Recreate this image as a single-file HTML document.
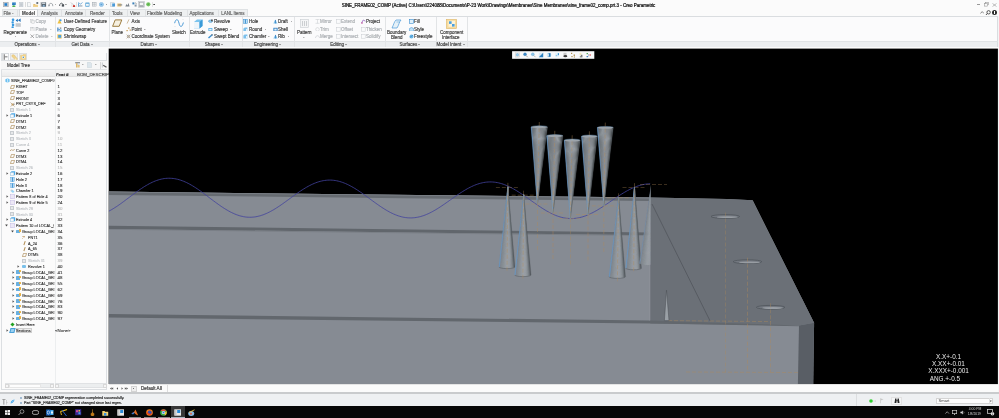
<!DOCTYPE html><html><head><meta charset="utf-8"><style>
html,body{margin:0;padding:0;}
body{width:999px;height:418px;overflow:hidden;position:relative;background:#f4f5f6;font-family:"Liberation Sans", sans-serif;}
.t{position:absolute;white-space:nowrap;line-height:1;-webkit-text-stroke:.14px currentColor;}
#root{position:absolute;left:0;top:0;width:999px;height:418px;will-change:transform;}
.r{position:absolute;box-sizing:border-box;}
svg{position:absolute;}
</style></head><body><div id="root"><div class="r" style="left:0px;top:0px;width:999px;height:16px;background:#fbfbfb;"></div><svg style="left:3px;top:2px" width="5.5" height="5" viewBox="0 0 5.5 5"><rect x=".3" y=".3" width="4.9" height="4.5" fill="#c4c8cc" stroke="#9aa0a6" stroke-width=".5"/><rect x="1.5" y="1.2" width="2.6" height="2.6" fill="#1f80d2"/></svg><svg style="left:11px;top:2px" width="5.5" height="5" viewBox="0 0 5.5 5"><rect x="1" y=".3" width="4" height="2.8" fill="#5a9ccf" rx=".5"/><circle cx="2.6" cy="2.2" r="1.3" fill="#2a7ac0"/><ellipse cx="2.8" cy="4.3" rx="1.8" ry=".7" fill="#40b040"/></svg><svg style="left:19px;top:2px" width="4.5" height="5" viewBox="0 0 4.5 5"><rect x=".5" y=".3" width="3.5" height="4.5" fill="#d6dbe0" stroke="#b6bec6" stroke-width=".4"/><line x1="1.2" y1="2" x2="3.3" y2="2" stroke="#9aa2aa" stroke-width=".4"/><line x1="1.2" y1="3.2" x2="3.3" y2="3.2" stroke="#9aa2aa" stroke-width=".4"/></svg><div class="r" style="left:24.6px;top:2px;width:0.5px;height:5px;background:#dcdcdc;"></div><svg style="left:26.5px;top:2px" width="4.5" height="5" viewBox="0 0 4.5 5"><path d="M.5,.3 H2.8 L4,1.5 V4.7 H.5 Z" fill="#f6f7f8" stroke="#a8b0b8" stroke-width=".45"/></svg><svg style="left:33px;top:1.5px" width="5.5" height="5.5" viewBox="0 0 5.5 5.5"><path d="M.3,2 H2 L2.6,2.7 H4.8 V5.2 H.3 Z" fill="#e8c070"/><path d="M.8,3.2 H5.2 L4.6,5.2 H.3 Z" fill="#f2d48e"/><rect x="3.4" y=".2" width="1.8" height="1.6" fill="#4a5560"/></svg><div class="r" style="left:39.6px;top:2px;width:0.5px;height:5px;background:#dcdcdc;"></div><svg style="left:41px;top:2px" width="5.5" height="5" viewBox="0 0 5.5 5"><rect x=".3" y=".3" width="4.8" height="4.5" fill="#5a6670" rx=".3"/><rect x="1.1" y=".5" width="3.2" height="1.5" fill="#c9d0d6"/><rect x="1.8" y="2.9" width="1.9" height="1.9" fill="#8fb8d8"/></svg><svg style="left:48px;top:2px" width="5.5" height="5" viewBox="0 0 5.5 5"><path d="M1.2,3.8 C.5,1.5 3,.6 4.5,2.2 L4.8,4.2" fill="none" stroke="#8a9096" stroke-width=".8"/><polygon points=".2,2.8 2,3.4 .8,4.8" fill="#8a9096"/></svg><svg style="left:54.54px;top:3.7600000000000002px" width="1.92" height="1.2800000000000002" viewBox="0 0 1.92 1.2800000000000002"><polygon points="0,0 1.92,0 0.96,1.2000000000000002" fill="#888"/></svg><svg style="left:59px;top:2px" width="5.5" height="5" viewBox="0 0 5.5 5"><path d="M.6,4 C.4,1.6 2.4,.6 3.6,1.6" fill="none" stroke="#4a5056" stroke-width=".9"/><rect x="2.8" y="2.2" width="2.3" height="2.4" fill="#4a5056"/></svg><svg style="left:65.04px;top:3.7600000000000002px" width="1.92" height="1.2800000000000002" viewBox="0 0 1.92 1.2800000000000002"><polygon points="0,0 1.92,0 0.96,1.2000000000000002" fill="#666"/></svg><svg style="left:70px;top:1.8px" width="5.5" height="5.5" viewBox="0 0 5.5 5.5"><path d="M.6,.6 L4.2,3" stroke="#c0c4c8" stroke-width=".7"/><path d="M1.5,4.5 L2.2,1.5" stroke="#d0d4d8" stroke-width=".6"/><circle cx="4" cy="4.2" r="1.2" fill="#cc3a30"/></svg><div class="r" style="left:76.3px;top:2px;width:0.5px;height:5px;background:#e2e2e2;"></div><svg style="left:78px;top:2px" width="5" height="5" viewBox="0 0 5 5"><path d="M.4,2.6 L1.6,1.4 L2.6,2.2 L4.4,.4" fill="none" stroke="#3d8ccc" stroke-width=".7"/><rect x=".4" y="3" width="4" height="1.8" fill="#b8c4ce"/><line x1=".5" y1=".3" x2=".5" y2="4.8" stroke="#3d8ccc" stroke-width=".6"/></svg><svg style="left:85px;top:2px" width="5" height="5" viewBox="0 0 5 5"><rect x=".3" y=".5" width="4.2" height="4.2" fill="#5ea6d6" rx=".4"/><rect x="1" y="1.8" width="2.8" height="2" fill="#eef6fb"/></svg><svg style="left:92px;top:2.3px" width="4.5" height="4.5" viewBox="0 0 4.5 4.5"><rect x=".3" y=".3" width="3.8" height="3.8" fill="none" stroke="#9aa2aa" stroke-width=".5"/><line x1="2.2" y1=".3" x2="2.2" y2="4.1" stroke="#9aa2aa" stroke-width=".5"/><line x1=".3" y1="2.2" x2="4.1" y2="2.2" stroke="#9aa2aa" stroke-width=".5"/></svg><svg style="left:99px;top:2px" width="5" height="5" viewBox="0 0 5 5"><circle cx="2.4" cy="2.5" r="2.1" fill="#bcdcf2" stroke="#5aa0d8" stroke-width=".5"/><rect x="1.4" y="1.6" width="2" height="1.8" fill="#5aa0d8"/></svg><svg style="left:105.54px;top:3.7600000000000002px" width="1.92" height="1.2800000000000002" viewBox="0 0 1.92 1.2800000000000002"><polygon points="0,0 1.92,0 0.96,1.2000000000000002" fill="#666"/></svg><svg style="left:110px;top:2px" width="5.5" height="5" viewBox="0 0 5.5 5"><rect x=".3" y=".8" width="4" height="3.8" fill="#e8eef2" stroke="#a8b4be" stroke-width=".4"/><rect x="2.2" y="1.5" width="2.8" height="3" fill="#4a9ad8"/></svg><svg style="left:117px;top:2px" width="5.5" height="5" viewBox="0 0 5.5 5"><rect x=".3" y="1.5" width="4" height="3" fill="#e8c070"/><rect x="1.2" y="2.3" width="4" height="1.2" fill="#8a9096"/></svg><svg style="left:125px;top:2px" width="5" height="5" viewBox="0 0 5 5"><path d="M.3,4.5 L1.6,2 L2.5,3.5 L3.5,1 L4.6,4.5 Z" fill="#7a828a"/></svg><svg style="left:132px;top:2px" width="5.5" height="5" viewBox="0 0 5.5 5"><rect x=".4" y=".4" width="2" height="2" fill="#3a80b8"/><rect x="2.6" y="2.6" width="2" height="2" fill="#8a9aa8"/><path d="M3,.6 L4.8,2" stroke="#555" stroke-width=".5"/></svg><svg style="left:138px;top:1.3px" width="7" height="6.8" viewBox="0 0 7 6.8"><rect x=".3" y=".3" width="6.4" height="6.2" fill="#d8dbde" stroke="#b8bcc0" stroke-width=".4"/><rect x="1.5" y="1.3" width="4" height="3" fill="#f6f6f6" stroke="#8a9096" stroke-width=".4"/><rect x="1.2" y="4.8" width="4.6" height=".8" fill="#8a9096"/></svg><svg style="left:146px;top:2.2px" width="5" height="5" viewBox="0 0 5 5"><circle cx="2.3" cy="2.3" r="2.1" fill="#7cc66a"/><circle cx="2.3" cy="2.3" r="1" fill="#5ab048"/></svg><div class="r" style="left:151.6px;top:2px;width:0.5px;height:5px;background:#e4e4e4;"></div><svg style="left:152.8px;top:3.8px" width="2.4" height="1.6" viewBox="0 0 2.4 1.6"><polygon points="0,0 2.4,0 1.2,1.5" fill="#333"/></svg><div class="t" style="left:341.7px;top:3.55px;font-size:4.47px;color:#111;font-weight:normal;-webkit-text-stroke:.22px #111">SINE_FRAME02_COMP (Active) C:\Users\224088\Documents\P-23 Work\Drawings\Membranes\Sine Membranes\sine_frame02_comp.prt.3 - Creo Parametric</div><div class="r" style="left:977px;top:4.4px;width:3px;height:0.7px;background:#999;"></div><svg style="left:983.5px;top:2.3px" width="5.5" height="4.5" viewBox="0 0 5.5 4.5"><rect x="1.5" y=".4" width="3.2" height="2.4" fill="none" stroke="#8a8a8a" stroke-width=".5"/><rect x=".4" y="1.6" width="3.2" height="2.5" fill="#fbfbfb" stroke="#8a8a8a" stroke-width=".5"/></svg><svg style="left:991.5px;top:2.5px" width="5" height="4" viewBox="0 0 5 4"><path d="M.5,.5 L4.5,3.5 M4.5,.5 L.5,3.5" stroke="#8a8a8a" stroke-width=".55"/></svg><svg style="left:979.5px;top:10.5px" width="4.5" height="3" viewBox="0 0 4.5 3"><path d="M.4,2.5 L2.2,.6 L4,2.5" fill="none" stroke="#555" stroke-width=".7"/></svg><svg style="left:984.5px;top:9.6px" width="6" height="5.5" viewBox="0 0 6 5.5"><circle cx="3.6" cy="2.3" r="1.7" fill="none" stroke="#333" stroke-width=".8"/><line x1="2.4" y1="3.5" x2=".5" y2="5.3" stroke="#333" stroke-width=".9"/></svg><div class="r" style="left:991.8px;top:9.8px;width:5.2px;height:5.2px;background:#2a2a2a;border-radius:50%"></div><div class="r" style="left:994.05px;top:10.9px;width:0.7px;height:0.7px;background:#fff;"></div><div class="r" style="left:994.05px;top:12px;width:0.7px;height:2px;background:#fff;"></div><div class="r" style="left:2px;top:9.4px;width:245.5px;height:7px;background:#eef0f1;border:.5px solid #dfe2e4;border-bottom:none"></div><div class="r" style="left:19px;top:9px;width:18.5px;height:8px;background:#fcfcfc;border:.5px solid #d6d9dc;border-bottom:none"></div><div class="r" style="left:16.8px;top:10.2px;width:0.5px;height:6px;background:#dfe1e3;"></div><div class="r" style="left:60.5px;top:10.2px;width:0.5px;height:6px;background:#dfe1e3;"></div><div class="r" style="left:84.6px;top:10.2px;width:0.5px;height:6px;background:#dfe1e3;"></div><div class="r" style="left:109.4px;top:10.2px;width:0.5px;height:6px;background:#dfe1e3;"></div><div class="r" style="left:127px;top:10.2px;width:0.5px;height:6px;background:#dfe1e3;"></div><div class="r" style="left:144.7px;top:10.2px;width:0.5px;height:6px;background:#dfe1e3;"></div><div class="r" style="left:187px;top:10.2px;width:0.5px;height:6px;background:#dfe1e3;"></div><div class="r" style="left:218.3px;top:10.2px;width:0.5px;height:6px;background:#dfe1e3;"></div><div class="t" style="left:3.5px;top:12.43px;font-size:4.5px;color:#5a5a5a;font-weight:normal;">File</div><div class="t" style="left:22px;top:12.43px;font-size:4.5px;color:#222;font-weight:bold;-webkit-text-stroke:0">Model</div><div class="t" style="left:41px;top:12.43px;font-size:4.5px;color:#5a5a5a;font-weight:normal;">Analysis</div><div class="t" style="left:65px;top:12.43px;font-size:4.5px;color:#5a5a5a;font-weight:normal;">Annotate</div><div class="t" style="left:90px;top:12.43px;font-size:4.5px;color:#5a5a5a;font-weight:normal;">Render</div><div class="t" style="left:111.9px;top:12.43px;font-size:4.5px;color:#5a5a5a;font-weight:normal;">Tools</div><div class="t" style="left:130px;top:12.43px;font-size:4.5px;color:#5a5a5a;font-weight:normal;">View</div><div class="t" style="left:146.9px;top:12.43px;font-size:4.5px;color:#5a5a5a;font-weight:normal;">Flexible Modeling</div><div class="t" style="left:189.4px;top:12.43px;font-size:4.5px;color:#5a5a5a;font-weight:normal;">Applications</div><div class="t" style="left:221.2px;top:12.43px;font-size:4.5px;color:#5a5a5a;font-weight:normal;">LANL Items</div><svg style="left:12.46px;top:13.24px" width="1.68" height="1.1199999999999999" viewBox="0 0 1.68 1.1199999999999999"><polygon points="0,0 1.68,0 0.84,1.0499999999999998" fill="#777"/></svg><div class="r" style="left:0px;top:16px;width:998px;height:25.3px;background:#fbfbfc;border-top:.6px solid #dadde0;border-right:.6px solid #dadde0"></div><div class="r" style="left:0px;top:41.3px;width:998px;height:5.5px;background:#eceef0;border-top:.5px solid #e0e3e5;border-right:.6px solid #dadde0"></div><div class="r" style="left:0px;top:46.8px;width:999px;height:2px;background:#fcfcfc;"></div><div class="r" style="left:55px;top:17px;width:0.6px;height:30px;background:#e2e4e6;"></div><div class="r" style="left:109.4px;top:17px;width:0.6px;height:30px;background:#e2e4e6;"></div><div class="r" style="left:188.5px;top:17px;width:0.6px;height:30px;background:#e2e4e6;"></div><div class="r" style="left:241.9px;top:17px;width:0.6px;height:30px;background:#e2e4e6;"></div><div class="r" style="left:294.4px;top:17px;width:0.6px;height:30px;background:#e2e4e6;"></div><div class="r" style="left:385px;top:17px;width:0.6px;height:30px;background:#e2e4e6;"></div><div class="r" style="left:435.6px;top:17px;width:0.6px;height:30px;background:#e2e4e6;"></div><div class="r" style="left:466.9px;top:17px;width:0.6px;height:30px;background:#e2e4e6;"></div><div class="t" style="left:-3px;width:60px;text-align:center;top:43.23px;font-size:4.5px;color:#3a3a3a"><span>Operations</span><span style="display:inline-block;width:1.2px"></span><svg style="position:relative;top:-.4px" width="2" height="1.4" viewBox="0 0 2 1.4"><polygon points="0,0 2,0 1,1.3" fill="#666"/></svg></div><div class="t" style="left:52px;width:60px;text-align:center;top:43.23px;font-size:4.5px;color:#3a3a3a"><span>Get Data</span><span style="display:inline-block;width:1.2px"></span><svg style="position:relative;top:-.4px" width="2" height="1.4" viewBox="0 0 2 1.4"><polygon points="0,0 2,0 1,1.3" fill="#666"/></svg></div><div class="t" style="left:118.69999999999999px;width:60px;text-align:center;top:43.23px;font-size:4.5px;color:#3a3a3a"><span>Datum</span><span style="display:inline-block;width:1.2px"></span><svg style="position:relative;top:-.4px" width="2" height="1.4" viewBox="0 0 2 1.4"><polygon points="0,0 2,0 1,1.3" fill="#666"/></svg></div><div class="t" style="left:184px;width:60px;text-align:center;top:43.23px;font-size:4.5px;color:#3a3a3a"><span>Shapes</span><span style="display:inline-block;width:1.2px"></span><svg style="position:relative;top:-.4px" width="2" height="1.4" viewBox="0 0 2 1.4"><polygon points="0,0 2,0 1,1.3" fill="#666"/></svg></div><div class="t" style="left:237.5px;width:60px;text-align:center;top:43.23px;font-size:4.5px;color:#3a3a3a"><span>Engineering</span><span style="display:inline-block;width:1.2px"></span><svg style="position:relative;top:-.4px" width="2" height="1.4" viewBox="0 0 2 1.4"><polygon points="0,0 2,0 1,1.3" fill="#666"/></svg></div><div class="t" style="left:308.7px;width:60px;text-align:center;top:43.23px;font-size:4.5px;color:#3a3a3a"><span>Editing</span><span style="display:inline-block;width:1.2px"></span><svg style="position:relative;top:-.4px" width="2" height="1.4" viewBox="0 0 2 1.4"><polygon points="0,0 2,0 1,1.3" fill="#666"/></svg></div><div class="t" style="left:380px;width:60px;text-align:center;top:43.23px;font-size:4.5px;color:#3a3a3a"><span>Surfaces</span><span style="display:inline-block;width:1.2px"></span><svg style="position:relative;top:-.4px" width="2" height="1.4" viewBox="0 0 2 1.4"><polygon points="0,0 2,0 1,1.3" fill="#666"/></svg></div><div class="t" style="left:420.6px;width:60px;text-align:center;top:43.23px;font-size:4.5px;color:#3a3a3a"><span>Model Intent</span><span style="display:inline-block;width:1.2px"></span><svg style="position:relative;top:-.4px" width="2" height="1.4" viewBox="0 0 2 1.4"><polygon points="0,0 2,0 1,1.3" fill="#666"/></svg></div><svg style="left:10.5px;top:18.3px" width="10.5" height="10.5" viewBox="0 0 10.5 10.5"><g fill="#3a9ae0"><rect x=".9" y=".6" width="2.3" height="2.3" rx=".7"/><rect x=".5" y="3.2" width="2.3" height="2.3" rx=".7"/><rect x=".9" y="5.8" width="2.3" height="2.3" rx=".7"/><rect x=".5" y="8.2" width="2.3" height="1.9" rx=".7"/></g><path d="M4.6,2.6 L6.8,.8 L6.8,4 Z M7,2.2 L9.6,.6 L9.6,4 Z" fill="#1d6fb8"/><rect x="4.6" y="5.2" width="5.2" height="3.6" fill="#c4c8cc"/></svg><div class="t" style="left:3.5px;top:30.73px;font-size:4.5px;color:#333;font-weight:normal;">Regenerate</div><svg style="left:14.54px;top:36.16px" width="1.92" height="1.2800000000000002" viewBox="0 0 1.92 1.2800000000000002"><polygon points="0,0 1.92,0 0.96,1.2000000000000002" fill="#777"/></svg><svg style="left:30px;top:19px" width="5" height="4.5" viewBox="0 0 5 4.5"><rect x=".4" y=".4" width="2.6" height="2.8" fill="#f0f0f0" stroke="#bcc0c4" stroke-width=".4"/><rect x="1.8" y="1.4" width="2.6" height="2.8" fill="#f0f0f0" stroke="#bcc0c4" stroke-width=".4"/></svg><svg style="left:30px;top:26.6px" width="5" height="4.8" viewBox="0 0 5 4.8"><rect x=".5" y=".8" width="3.6" height="3.6" fill="#eee" stroke="#bcc0c4" stroke-width=".4"/><rect x="1.5" y=".3" width="1.6" height="1" fill="#bcc0c4"/></svg><svg style="left:30px;top:34.2px" width="5" height="4.5" viewBox="0 0 5 4.5"><path d="M.5,.5 L4,4 M4,.5 L.5,4" stroke="#777" stroke-width=".6"/></svg><div class="t" style="left:35.5px;top:19.53px;font-size:4.5px;color:#a9adb1;font-weight:normal;">Copy</div><div class="t" style="left:35.5px;top:27.83px;font-size:4.5px;color:#a9adb1;font-weight:normal;">Paste</div><svg style="left:49.959999999999994px;top:29.040000000000003px" width="1.68" height="1.1199999999999999" viewBox="0 0 1.68 1.1199999999999999"><polygon points="0,0 1.68,0 0.84,1.0499999999999998" fill="#b0b0b0"/></svg><div class="t" style="left:35.5px;top:34.63px;font-size:4.5px;color:#a9adb1;font-weight:normal;">Delete</div><svg style="left:51.459999999999994px;top:35.839999999999996px" width="1.68" height="1.1199999999999999" viewBox="0 0 1.68 1.1199999999999999"><polygon points="0,0 1.68,0 0.84,1.0499999999999998" fill="#b0b0b0"/></svg><svg style="left:57.3px;top:18.8px" width="5" height="5" viewBox="0 0 5 5"><path d="M1.8,.4 H3.2 V1.8 L4.6,4.6 H.4 L1.8,1.8 Z" fill="#f0c040"/><circle cx="3.6" cy="1.3" r="1" fill="#4aa0e0"/></svg><svg style="left:57.3px;top:26.5px" width="5" height="5" viewBox="0 0 5 5"><rect x=".3" y=".5" width="1.2" height="4" fill="#3a7fc0"/><rect x="1.5" y="2" width="1.5" height=".8" fill="#3a7fc0"/><rect x="2.5" y="2.5" width="2.2" height="2.2" fill="#6ab8e8"/><rect x="2.8" y=".4" width="1.5" height="1.5" fill="#999"/></svg><svg style="left:57.3px;top:34px" width="5" height="5" viewBox="0 0 5 5"><rect x=".3" y=".3" width="4.3" height="4.3" fill="#f2c860"/><rect x="1.2" y="1" width="3" height="2.8" fill="#4aa0e0"/></svg><div class="t" style="left:63.7px;top:19.53px;font-size:4.5px;color:#333;font-weight:normal;">User-Defined Feature</div><div class="t" style="left:63.7px;top:27.83px;font-size:4.5px;color:#333;font-weight:normal;">Copy Geometry</div><div class="t" style="left:63.7px;top:34.63px;font-size:4.5px;color:#333;font-weight:normal;">Shrinkwrap</div><svg style="left:112px;top:19.3px" width="10.5" height="8.5" viewBox="0 0 10.5 8.5"><polygon points="3.2,.9 9.8,.9 7.2,7.3 .6,7.3" fill="#f6f0e0" stroke="#9c7c40" stroke-width="1"/></svg><div class="t" style="left:111.5px;top:30.53px;font-size:4.5px;color:#333;font-weight:normal;">Plane</div><svg style="left:125.8px;top:18.9px" width="4" height="5" viewBox="0 0 4 5"><line x1="1" y1="4.6" x2="3" y2=".4" stroke="#b09060" stroke-width=".6"/></svg><svg style="left:125.5px;top:26.5px" width="5" height="5" viewBox="0 0 5 5"><rect x="2.2" y=".5" width="1.2" height="1.2" fill="#c09040"/><rect x=".5" y="3" width="1.2" height="1.2" fill="#c09040"/><rect x="3.6" y="2.5" width="1.2" height="1.2" fill="#c09040"/></svg><svg style="left:125.5px;top:34px" width="5" height="5" viewBox="0 0 5 5"><path d="M.5,.5 L4.5,4.5 M4.5,.5 L.5,4.5" stroke="#b09060" stroke-width=".5"/><circle cx="2.5" cy="2.5" r="1.2" fill="none" stroke="#6a6a6a" stroke-width=".5"/></svg><div class="t" style="left:131.5px;top:19.53px;font-size:4.5px;color:#333;font-weight:normal;">Axis</div><div class="t" style="left:131.5px;top:27.83px;font-size:4.5px;color:#333;font-weight:normal;">Point</div><div class="t" style="left:131.5px;top:34.63px;font-size:4.5px;color:#333;font-weight:normal;">Coordinate System</div><svg style="left:144.16px;top:29.040000000000003px" width="1.68" height="1.1199999999999999" viewBox="0 0 1.68 1.1199999999999999"><polygon points="0,0 1.68,0 0.84,1.0499999999999998" fill="#777"/></svg><svg style="left:174px;top:18.8px" width="10" height="8.5" viewBox="0 0 10 8.5"><path d="M.6,4.2 C2,-.8 4,-.3 5,4.2 C6,8.7 8,8.7 9.4,3.5" fill="none" stroke="#3a8ed0" stroke-width=".9"/><g fill="#c0c4c8"><rect x=".5" y="7.5" width="1" height=".5"/><rect x="8.5" y=".5" width="1" height=".5"/></g></svg><div class="t" style="left:172px;top:30.53px;font-size:4.5px;color:#333;font-weight:normal;">Sketch</div><svg style="left:192.5px;top:18.5px" width="10" height="10" viewBox="0 0 10 10"><polygon points="1,3 4,.5 9.5,.5 9.5,7 6.5,9.5 1,9.5" fill="#7cc4ee"/><polygon points="1,3 6.5,3 6.5,9.5 1,9.5" fill="#eef5fa"/><polygon points="6.5,3 9.5,.5 9.5,7 6.5,9.5" fill="#3a9ad8"/></svg><div class="t" style="left:190px;top:30.53px;font-size:4.5px;color:#333;font-weight:normal;">Extrude</div><svg style="left:208.3px;top:19.3px" width="5" height="4.5" viewBox="0 0 5 4.5"><path d="M.4,2.2 C.4,.6 4.6,.6 4.6,2.2 C4.6,3.8 .4,3.8 .4,2.2" fill="#9ad0f0" stroke="#3a90d0" stroke-width=".5"/><rect x="3" y=".5" width="1.8" height="1.8" fill="#555"/></svg><svg style="left:208.3px;top:26.8px" width="5" height="4.5" viewBox="0 0 5 4.5"><rect x=".4" y="1" width="4" height="3.2" fill="#5ab0e8" rx=".6"/><rect x="1.2" y="1.8" width="2.4" height="1.6" fill="#e6f2fa"/></svg><svg style="left:208.3px;top:34.3px" width="5" height="4.5" viewBox="0 0 5 4.5"><path d="M.5,4 L4.5,.5" stroke="#3a8ed0" stroke-width="1.4"/><rect x="3.4" y=".3" width="1.2" height="1.2" fill="#777"/></svg><div class="t" style="left:214px;top:19.53px;font-size:4.5px;color:#333;font-weight:normal;">Revolve</div><div class="t" style="left:214px;top:27.83px;font-size:4.5px;color:#333;font-weight:normal;">Sweep</div><div class="t" style="left:214px;top:34.63px;font-size:4.5px;color:#333;font-weight:normal;">Swept Blend</div><svg style="left:230.46px;top:29.040000000000003px" width="1.68" height="1.1199999999999999" viewBox="0 0 1.68 1.1199999999999999"><polygon points="0,0 1.68,0 0.84,1.0499999999999998" fill="#777"/></svg><svg style="left:243.3px;top:19px" width="5" height="4.8" viewBox="0 0 5 4.8"><rect x=".4" y=".4" width="4" height="4" fill="#bfe0f6" stroke="#3a90d0" stroke-width=".5"/><rect x="1.9" y=".4" width="1" height="4" fill="#3a90d0"/></svg><svg style="left:243.3px;top:26.6px" width="5" height="4.8" viewBox="0 0 5 4.8"><path d="M.4,4.4 V2 Q.4,.4 2,.4 H4.4 V4.4 Z" fill="#7cc0ec"/><rect x="3" y="2" width="1.5" height="2.4" fill="#e8f4fb"/></svg><svg style="left:243.3px;top:34.1px" width="5" height="4.8" viewBox="0 0 5 4.8"><path d="M.4,4.4 V1.6 L1.6,.4 H4.4 V4.4 Z" fill="#7cc0ec"/><rect x="3" y="2" width="1.5" height="2.4" fill="#e8f4fb"/></svg><div class="t" style="left:249px;top:19.53px;font-size:4.5px;color:#333;font-weight:normal;">Hole</div><div class="t" style="left:249px;top:27.83px;font-size:4.5px;color:#333;font-weight:normal;">Round</div><div class="t" style="left:249px;top:34.63px;font-size:4.5px;color:#333;font-weight:normal;">Chamfer</div><svg style="left:264.66px;top:29.040000000000003px" width="1.68" height="1.1199999999999999" viewBox="0 0 1.68 1.1199999999999999"><polygon points="0,0 1.68,0 0.84,1.0499999999999998" fill="#777"/></svg><svg style="left:268.46000000000004px;top:35.839999999999996px" width="1.68" height="1.1199999999999999" viewBox="0 0 1.68 1.1199999999999999"><polygon points="0,0 1.68,0 0.84,1.0499999999999998" fill="#777"/></svg><svg style="left:272.5px;top:19px" width="5" height="4.8" viewBox="0 0 5 4.8"><polygon points="2.2,.4 .4,4.4 4.4,4.4" fill="#7cc0ec"/><rect x="2" y="1" width=".8" height="3.4" fill="#3a80c0"/></svg><svg style="left:272.5px;top:26.6px" width="5" height="4.8" viewBox="0 0 5 4.8"><rect x=".4" y=".8" width="4.2" height="3.6" fill="#2e7cc0"/><rect x="1.3" y="1.6" width="2.4" height="2" fill="#dff0fa"/></svg><svg style="left:272.5px;top:34.1px" width="5" height="4.8" viewBox="0 0 5 4.8"><path d="M.4,4.4 L2.5,.4 L4.6,4.4" fill="#7cc0ec"/><rect x="2.1" y="1" width=".8" height="3.4" fill="#3a80c0"/></svg><div class="t" style="left:278px;top:19.53px;font-size:4.5px;color:#333;font-weight:normal;">Draft</div><div class="t" style="left:278px;top:27.83px;font-size:4.5px;color:#333;font-weight:normal;">Shell</div><div class="t" style="left:278px;top:34.63px;font-size:4.5px;color:#333;font-weight:normal;">Rib</div><svg style="left:290.66px;top:20.740000000000002px" width="1.68" height="1.1199999999999999" viewBox="0 0 1.68 1.1199999999999999"><polygon points="0,0 1.68,0 0.84,1.0499999999999998" fill="#777"/></svg><svg style="left:287.76000000000005px;top:35.839999999999996px" width="1.68" height="1.1199999999999999" viewBox="0 0 1.68 1.1199999999999999"><polygon points="0,0 1.68,0 0.84,1.0499999999999998" fill="#777"/></svg><svg style="left:299.5px;top:18.5px" width="9" height="9" viewBox="0 0 9 9"><rect x=".5" y=".5" width="8" height="8" fill="#f4f5f6" stroke="#c9cdd1" stroke-width=".6"/><g stroke="#aeb3b8" stroke-width=".6"><line x1="2.5" y1="2" x2="2.5" y2="7"/><line x1="4.5" y1="2" x2="4.5" y2="7"/><line x1="6.5" y1="2" x2="6.5" y2="7"/></g></svg><div class="t" style="left:297px;top:31.23px;font-size:4.5px;color:#333;font-weight:normal;">Pattern</div><svg style="left:303.16px;top:36.54px" width="1.68" height="1.1199999999999999" viewBox="0 0 1.68 1.1199999999999999"><polygon points="0,0 1.68,0 0.84,1.0499999999999998" fill="#888"/></svg><svg style="left:315px;top:19px" width="5" height="4.8" viewBox="0 0 5 4.8"><path d="M.5,.5 H4.5 M.5,4.3 H4.5 M2.5,.5 V4.3" stroke="#c4c8cc" stroke-width=".5"/></svg><svg style="left:315px;top:26.6px" width="5" height="4.8" viewBox="0 0 5 4.8"><circle cx="2.5" cy="2.4" r="1.8" fill="none" stroke="#c4c8cc" stroke-width=".5"/></svg><svg style="left:315px;top:34.1px" width="5" height="4.8" viewBox="0 0 5 4.8"><path d="M.5,4 C.5,1 4.5,1 4.5,4" fill="none" stroke="#c4c8cc" stroke-width=".6"/></svg><div class="t" style="left:320px;top:19.53px;font-size:4.5px;color:#a9adb1;font-weight:normal;">Mirror</div><div class="t" style="left:320px;top:27.83px;font-size:4.5px;color:#a9adb1;font-weight:normal;">Trim</div><div class="t" style="left:320px;top:34.63px;font-size:4.5px;color:#a9adb1;font-weight:normal;">Merge</div><svg style="left:336px;top:19.0px" width="5" height="4.8" viewBox="0 0 5 4.8"><rect x=".6" y=".6" width="3.6" height="3.6" fill="none" stroke="#c8ccd0" stroke-width=".5"/></svg><svg style="left:336px;top:27.3px" width="5" height="4.8" viewBox="0 0 5 4.8"><rect x=".6" y=".6" width="3.6" height="3.6" fill="none" stroke="#c8ccd0" stroke-width=".5"/></svg><svg style="left:336px;top:34.1px" width="5" height="4.8" viewBox="0 0 5 4.8"><rect x=".6" y=".6" width="3.6" height="3.6" fill="none" stroke="#c8ccd0" stroke-width=".5"/></svg><div class="t" style="left:341px;top:19.53px;font-size:4.5px;color:#a9adb1;font-weight:normal;">Extend</div><div class="t" style="left:341px;top:27.83px;font-size:4.5px;color:#a9adb1;font-weight:normal;">Offset</div><div class="t" style="left:341px;top:34.63px;font-size:4.5px;color:#a9adb1;font-weight:normal;">Intersect</div><svg style="left:360.5px;top:19px" width="5" height="4.8" viewBox="0 0 5 4.8"><path d="M.5,4.2 L2.2,1 L4.5,2.2" fill="none" stroke="#9a6ac0" stroke-width=".8"/><circle cx="1" cy="4" r=".8" fill="#c04a9a"/></svg><div class="t" style="left:366px;top:19.53px;font-size:4.5px;color:#333;font-weight:normal;">Project</div><svg style="left:360.5px;top:27.3px" width="5" height="4.8" viewBox="0 0 5 4.8"><rect x=".6" y=".6" width="3.6" height="3.6" fill="none" stroke="#c8ccd0" stroke-width=".5"/></svg><svg style="left:360.5px;top:34.1px" width="5" height="4.8" viewBox="0 0 5 4.8"><rect x=".6" y=".6" width="3.6" height="3.6" fill="none" stroke="#c8ccd0" stroke-width=".5"/></svg><div class="t" style="left:366px;top:27.83px;font-size:4.5px;color:#a9adb1;font-weight:normal;">Thicken</div><div class="t" style="left:366px;top:34.63px;font-size:4.5px;color:#a9adb1;font-weight:normal;">Solidify</div><svg style="left:391px;top:18.5px" width="11" height="10" viewBox="0 0 11 10"><path d="M1,9 C3,5 3,3 5,1 L10,1 C8,3 8,6 6,9 Z" fill="#e6f1f8" stroke="#4a9ad8" stroke-width=".7"/><path d="M5.5,3 L8.5,3" stroke="#4a9ad8" stroke-width=".5"/></svg><div class="t" style="left:387px;top:30.83px;font-size:4.5px;color:#333;font-weight:normal;">Boundary</div><div class="t" style="left:391px;top:36.03px;font-size:4.5px;color:#333;font-weight:normal;">Blend</div><svg style="left:408.5px;top:19px" width="5" height="4.8" viewBox="0 0 5 4.8"><rect x=".5" y=".5" width="4" height="3.8" fill="#dff0fa" stroke="#3a8ed0" stroke-width=".6"/></svg><svg style="left:408.5px;top:26.6px" width="5" height="4.8" viewBox="0 0 5 4.8"><path d="M.5,4.3 V1.5 Q2.5,-.5 4.5,1.5 V4.3 Z" fill="#bfe0f6" stroke="#3a8ed0" stroke-width=".5"/></svg><svg style="left:408.5px;top:34.1px" width="5" height="4.8" viewBox="0 0 5 4.8"><circle cx="2.5" cy="2.4" r="2" fill="#6ab8e8"/><path d="M.8,3.5 L4.2,1" stroke="#2a70b0" stroke-width=".5"/></svg><div class="t" style="left:414px;top:19.53px;font-size:4.5px;color:#333;font-weight:normal;">Fill</div><div class="t" style="left:414px;top:27.83px;font-size:4.5px;color:#333;font-weight:normal;">Style</div><div class="t" style="left:414px;top:34.63px;font-size:4.5px;color:#333;font-weight:normal;">Freestyle</div><svg style="left:445.5px;top:18.5px" width="11" height="10" viewBox="0 0 11 10"><rect x=".3" y=".3" width="10.4" height="9.4" fill="#f6dca0" stroke="#d9b060" stroke-width=".5"/><rect x="2.5" y="1.8" width="6.5" height="6" fill="#fff3d6"/><rect x="3" y="2.3" width="2.6" height="2.6" fill="#4aa0e0"/><rect x="6" y="5" width="2.6" height="2.6" fill="#4aa0e0"/></svg><div class="t" style="left:440px;top:30.83px;font-size:4.5px;color:#333;font-weight:normal;">Component</div><div class="t" style="left:442px;top:36.03px;font-size:4.5px;color:#333;font-weight:normal;">Interface</div><div class="r" style="left:0px;top:47.3px;width:108.6px;height:346px;background:#fbfbfb;"></div><div class="r" style="left:1.3px;top:52.6px;width:106px;height:337px;background:#fbfbfb;border:.5px solid #dcdfe2;border-top:none"></div><div class="r" style="left:1.5px;top:52.6px;width:7.8px;height:8px;background:#fcfcfc;border:.5px solid #d8dbde;border-bottom:none"></div><div class="r" style="left:9.5px;top:53px;width:8.5px;height:7.3px;background:#eceef0;border:.5px solid #dfe1e3"></div><div class="r" style="left:18.5px;top:53px;width:8.5px;height:7.3px;background:#eceef0;border:.5px solid #dfe1e3"></div><svg style="left:3px;top:53.8px" width="6" height="6" viewBox="0 0 6 6"><rect x=".7" y=".2" width="1" height="5.6" fill="#6a6a6a"/><rect x="1.7" y="2.4" width="2.8" height=".9" fill="#6a6a6a"/></svg><svg style="left:10.5px;top:53.6px" width="7" height="6.8" viewBox="0 0 7 6.8"><path d="M1,1.2 Q2,.2 3.2,1 L6.2,4.6 Q6.5,6.2 4.8,6.3 L1.2,2.8 Q.4,2 1,1.2 Z" fill="#f0d490" stroke="#e0b860" stroke-width=".4"/><ellipse cx="4.6" cy="5.2" rx="1" ry=".6" fill="#fff6dc"/></svg><svg style="left:19.5px;top:53.8px" width="7" height="6" viewBox="0 0 7 6"><path d="M.5,1.2 H2.6 L3.2,.6 H5.8 V5.5 H.5 Z" fill="#f2d48a" stroke="#e0b860" stroke-width=".3"/><circle cx="3.3" cy="3.3" r="1.3" fill="#fff"/><circle cx="3.3" cy="3.3" r=".8" fill="#3a88c0"/></svg><div class="r" style="left:1.3px;top:60.3px;width:106px;height:9.4px;background:#f7f7f7;border-top:.5px solid #dcdfe2;border-bottom:.5px solid #e2e4e6"></div><div class="t" style="left:7px;top:63.58px;font-size:4.6px;color:#333;font-weight:normal;">Model Tree</div><svg style="left:74.8px;top:62px" width="5.5" height="6" viewBox="0 0 5.5 6"><rect x=".2" y=".3" width="4.8" height="1" fill="#6a6e74"/><rect x="1.2" y="1.3" width="1.3" height="4.2" fill="#d8a848"/><rect x="3.2" y="3" width="1.3" height="2.5" fill="#e0b860"/><rect x="2.8" y="1.3" width="1.6" height="1.5" fill="#c8d8e8"/></svg><svg style="left:82.46px;top:64.44px" width="1.68" height="1.1199999999999999" viewBox="0 0 1.68 1.1199999999999999"><polygon points="0,0 1.68,0 0.84,1.0499999999999998" fill="#777"/></svg><svg style="left:87.3px;top:62.3px" width="5" height="5.8" viewBox="0 0 5 5.8"><path d="M.3,.3 H3.3 L4.6,1.5 V5.5 H.3 Z" fill="#dde6ec" stroke="#b8c4cc" stroke-width=".35"/></svg><svg style="left:94.86px;top:64.44px" width="1.68" height="1.1199999999999999" viewBox="0 0 1.68 1.1199999999999999"><polygon points="0,0 1.68,0 0.84,1.0499999999999998" fill="#777"/></svg><div class="r" style="left:100.3px;top:62px;width:0.5px;height:6.5px;background:#d8d8d8;"></div><svg style="left:101px;top:62px" width="6" height="6" viewBox="0 0 6 6"><rect x=".8" y=".5" width="1.2" height="5" fill="#cfd3d6"/><path d="M2.2,3.2 L5.5,5.3" stroke="#555" stroke-width="1.1"/></svg><div class="r" style="left:1.8px;top:70px;width:105.2px;height:7.2px;background:linear-gradient(#f6f6f6,#ebebeb);border-bottom:.5px solid #e0e0e0"></div><div class="t" style="left:56px;top:73.13px;font-size:4.3px;color:#333;font-weight:bold;font-style:italic">Feat #</div><div class="t" style="left:77px;top:73.08px;font-size:4.4px;color:#444;font-weight:normal;">BOM_DESCRIP</div><div class="r" style="left:54.6px;top:70px;width:0.6px;height:313.5px;background:#eceeef;"></div><svg style="left:5.00px;top:78.40px" width="5" height="5" viewBox="0 0 5 5"><path d="M.4,1.2 Q2.5,-.2 4.6,1.2 V3.8 Q2.5,5.2 .4,3.8 Z" fill="#6cc0f0"/><path d="M2.6,1 V4.4" stroke="#fff" stroke-width=".6"/></svg><div class="t" style="left:10.50px;top:79.12px;font-size:4.1px;color:#1e1e1e;width:47.35px;overflow:hidden;transform:scaleX(.925);transform-origin:0 0;-webkit-text-stroke:.1px #1e1e1e">SINE_FRAME02_COMP.PRT</div><svg style="left:10.00px;top:84.50px" width="5" height="4" viewBox="0 0 5 4"><polygon points="1.5,.4 4.6,.4 3.5,3.6 .4,3.6" fill="none" stroke="#a07a40" stroke-width=".6"/></svg><div class="t" style="left:16.00px;top:84.92px;font-size:4.1px;color:#1e1e1e;width:41.41px;overflow:hidden;transform:scaleX(.925);transform-origin:0 0;-webkit-text-stroke:.1px #1e1e1e">RIGHT</div><div class="t" style="left:57.6px;top:84.92px;font-size:4.1px;color:#2a2a2a;font-size:4.4px;-webkit-text-stroke:.12px #2a2a2a;-webkit-text-stroke:.1px #333">1</div><svg style="left:10.00px;top:90.30px" width="5" height="4" viewBox="0 0 5 4"><polygon points="1.5,.4 4.6,.4 3.5,3.6 .4,3.6" fill="none" stroke="#a07a40" stroke-width=".6"/></svg><div class="t" style="left:16.00px;top:90.72px;font-size:4.1px;color:#1e1e1e;width:41.41px;overflow:hidden;transform:scaleX(.925);transform-origin:0 0;-webkit-text-stroke:.1px #1e1e1e">TOP</div><div class="t" style="left:57.6px;top:90.72px;font-size:4.1px;color:#2a2a2a;font-size:4.4px;-webkit-text-stroke:.12px #2a2a2a;-webkit-text-stroke:.1px #333">2</div><svg style="left:10.00px;top:96.10px" width="5" height="4" viewBox="0 0 5 4"><polygon points="1.5,.4 4.6,.4 3.5,3.6 .4,3.6" fill="none" stroke="#a07a40" stroke-width=".6"/></svg><div class="t" style="left:16.00px;top:96.52px;font-size:4.1px;color:#1e1e1e;width:41.41px;overflow:hidden;transform:scaleX(.925);transform-origin:0 0;-webkit-text-stroke:.1px #1e1e1e">FRONT</div><div class="t" style="left:57.6px;top:96.52px;font-size:4.1px;color:#2a2a2a;font-size:4.4px;-webkit-text-stroke:.12px #2a2a2a;-webkit-text-stroke:.1px #333">3</div><svg style="left:10.00px;top:101.60px" width="5" height="5" viewBox="0 0 5 5"><path d="M.5,.5 L4.5,4.5 M4.5,.8 L.8,4.5" stroke="#8a7050" stroke-width=".5"/><circle cx="2.5" cy="2.6" r="1" fill="#c8a060"/><rect x="3.6" y="2.2" width=".8" height=".8" fill="#444"/></svg><div class="t" style="left:16.00px;top:102.32px;font-size:4.1px;color:#1e1e1e;width:41.41px;overflow:hidden;transform:scaleX(.925);transform-origin:0 0;-webkit-text-stroke:.1px #1e1e1e">PRT_CSYS_DEF</div><div class="t" style="left:57.6px;top:102.32px;font-size:4.1px;color:#2a2a2a;font-size:4.4px;-webkit-text-stroke:.12px #2a2a2a;-webkit-text-stroke:.1px #333">4</div><div class="r" style="left:10.3px;top:107.7px;width:4px;height:4px;background:#e6e8ea;border:.4px solid #c8ccd0"></div><div class="t" style="left:16.00px;top:108.12px;font-size:4.1px;color:#b9bdc1;width:41.41px;overflow:hidden;transform:scaleX(.925);transform-origin:0 0;-webkit-text-stroke:.1px #b9bdc1">Sketch 1</div><div class="t" style="left:57.6px;top:108.12px;font-size:4.1px;color:#bbb;font-size:4.4px;-webkit-text-stroke:.12px #bbb;-webkit-text-stroke:.1px #bbb">5</div><svg style="left:5.70px;top:114.00px" width="3" height="3" viewBox="0 0 3 3"><polygon points=".5,.3 2.3,1.5 .5,2.7" fill="#555"/></svg><svg style="left:10.00px;top:113.00px" width="5.5" height="5" viewBox="0 0 5.5 5"><polygon points=".3,1.5 1.6,.3 5.2,.3 5.2,3.6 3.9,4.8 .3,4.8" fill="#4aa8e8"/><rect x=".3" y="1.5" width="3.6" height="3.3" fill="#f4f8fb" stroke="#9ab8d0" stroke-width=".3"/></svg><div class="t" style="left:16.00px;top:113.92px;font-size:4.1px;color:#1e1e1e;width:41.41px;overflow:hidden;transform:scaleX(.925);transform-origin:0 0;-webkit-text-stroke:.1px #1e1e1e">Extrude 1</div><div class="t" style="left:57.6px;top:113.92px;font-size:4.1px;color:#2a2a2a;font-size:4.4px;-webkit-text-stroke:.12px #2a2a2a;-webkit-text-stroke:.1px #333">6</div><svg style="left:10.00px;top:119.30px" width="5" height="4" viewBox="0 0 5 4"><polygon points="1.5,.4 4.6,.4 3.5,3.6 .4,3.6" fill="none" stroke="#a07a40" stroke-width=".6"/></svg><div class="t" style="left:16.00px;top:119.72px;font-size:4.1px;color:#1e1e1e;width:41.41px;overflow:hidden;transform:scaleX(.925);transform-origin:0 0;-webkit-text-stroke:.1px #1e1e1e">DTM1</div><div class="t" style="left:57.6px;top:119.72px;font-size:4.1px;color:#2a2a2a;font-size:4.4px;-webkit-text-stroke:.12px #2a2a2a;-webkit-text-stroke:.1px #333">7</div><svg style="left:10.00px;top:125.10px" width="5" height="4" viewBox="0 0 5 4"><polygon points="1.5,.4 4.6,.4 3.5,3.6 .4,3.6" fill="none" stroke="#a07a40" stroke-width=".6"/></svg><div class="t" style="left:16.00px;top:125.52px;font-size:4.1px;color:#1e1e1e;width:41.41px;overflow:hidden;transform:scaleX(.925);transform-origin:0 0;-webkit-text-stroke:.1px #1e1e1e">DTM2</div><div class="t" style="left:57.6px;top:125.52px;font-size:4.1px;color:#2a2a2a;font-size:4.4px;-webkit-text-stroke:.12px #2a2a2a;-webkit-text-stroke:.1px #333">8</div><div class="r" style="left:10.3px;top:130.9px;width:4px;height:4px;background:#e6e8ea;border:.4px solid #c8ccd0"></div><div class="t" style="left:16.00px;top:131.32px;font-size:4.1px;color:#b9bdc1;width:41.41px;overflow:hidden;transform:scaleX(.925);transform-origin:0 0;-webkit-text-stroke:.1px #b9bdc1">Sketch 2</div><div class="t" style="left:57.6px;top:131.32px;font-size:4.1px;color:#bbb;font-size:4.4px;-webkit-text-stroke:.12px #bbb;-webkit-text-stroke:.1px #bbb">9</div><div class="r" style="left:10.3px;top:136.7px;width:4px;height:4px;background:#e6e8ea;border:.4px solid #c8ccd0"></div><div class="t" style="left:16.00px;top:137.12px;font-size:4.1px;color:#b9bdc1;width:41.41px;overflow:hidden;transform:scaleX(.925);transform-origin:0 0;-webkit-text-stroke:.1px #b9bdc1">Sketch 3</div><div class="t" style="left:57.6px;top:137.12px;font-size:4.1px;color:#bbb;font-size:4.4px;-webkit-text-stroke:.12px #bbb;-webkit-text-stroke:.1px #bbb">10</div><div class="r" style="left:10.3px;top:142.5px;width:4px;height:4px;background:#e6e8ea;border:.4px solid #c8ccd0"></div><div class="t" style="left:16.00px;top:142.92px;font-size:4.1px;color:#b9bdc1;width:41.41px;overflow:hidden;transform:scaleX(.925);transform-origin:0 0;-webkit-text-stroke:.1px #b9bdc1">Curve 4</div><div class="t" style="left:57.6px;top:142.92px;font-size:4.1px;color:#bbb;font-size:4.4px;-webkit-text-stroke:.12px #bbb;-webkit-text-stroke:.1px #bbb">11</div><svg style="left:10.00px;top:148.30px" width="5" height="4" viewBox="0 0 5 4"><path d="M.3,3 C1.5,-.5 2.5,4.5 4.7,1" fill="none" stroke="#a07a40" stroke-width=".6"/></svg><div class="t" style="left:16.00px;top:148.72px;font-size:4.1px;color:#1e1e1e;width:41.41px;overflow:hidden;transform:scaleX(.925);transform-origin:0 0;-webkit-text-stroke:.1px #1e1e1e">Curve 2</div><div class="t" style="left:57.6px;top:148.72px;font-size:4.1px;color:#2a2a2a;font-size:4.4px;-webkit-text-stroke:.12px #2a2a2a;-webkit-text-stroke:.1px #333">12</div><svg style="left:10.00px;top:154.10px" width="5" height="4" viewBox="0 0 5 4"><polygon points="1.5,.4 4.6,.4 3.5,3.6 .4,3.6" fill="none" stroke="#a07a40" stroke-width=".6"/></svg><div class="t" style="left:16.00px;top:154.52px;font-size:4.1px;color:#1e1e1e;width:41.41px;overflow:hidden;transform:scaleX(.925);transform-origin:0 0;-webkit-text-stroke:.1px #1e1e1e">DTM3</div><div class="t" style="left:57.6px;top:154.52px;font-size:4.1px;color:#2a2a2a;font-size:4.4px;-webkit-text-stroke:.12px #2a2a2a;-webkit-text-stroke:.1px #333">13</div><svg style="left:10.00px;top:159.90px" width="5" height="4" viewBox="0 0 5 4"><polygon points="1.5,.4 4.6,.4 3.5,3.6 .4,3.6" fill="none" stroke="#a07a40" stroke-width=".6"/></svg><div class="t" style="left:16.00px;top:160.32px;font-size:4.1px;color:#1e1e1e;width:41.41px;overflow:hidden;transform:scaleX(.925);transform-origin:0 0;-webkit-text-stroke:.1px #1e1e1e">DTM4</div><div class="t" style="left:57.6px;top:160.32px;font-size:4.1px;color:#2a2a2a;font-size:4.4px;-webkit-text-stroke:.12px #2a2a2a;-webkit-text-stroke:.1px #333">14</div><div class="r" style="left:10.3px;top:165.7px;width:4px;height:4px;background:#e6e8ea;border:.4px solid #c8ccd0"></div><div class="t" style="left:16.00px;top:166.12px;font-size:4.1px;color:#b9bdc1;width:41.41px;overflow:hidden;transform:scaleX(.925);transform-origin:0 0;-webkit-text-stroke:.1px #b9bdc1">Sketch 26</div><div class="t" style="left:57.6px;top:166.12px;font-size:4.1px;color:#bbb;font-size:4.4px;-webkit-text-stroke:.12px #bbb;-webkit-text-stroke:.1px #bbb">15</div><svg style="left:5.70px;top:172.00px" width="3" height="3" viewBox="0 0 3 3"><polygon points=".5,.3 2.3,1.5 .5,2.7" fill="#555"/></svg><svg style="left:10.00px;top:171.00px" width="5.5" height="5" viewBox="0 0 5.5 5"><polygon points=".3,1.5 1.6,.3 5.2,.3 5.2,3.6 3.9,4.8 .3,4.8" fill="#4aa8e8"/><rect x=".3" y="1.5" width="3.6" height="3.3" fill="#f4f8fb" stroke="#9ab8d0" stroke-width=".3"/></svg><div class="t" style="left:16.00px;top:171.92px;font-size:4.1px;color:#1e1e1e;width:41.41px;overflow:hidden;transform:scaleX(.925);transform-origin:0 0;-webkit-text-stroke:.1px #1e1e1e">Extrude 2</div><div class="t" style="left:57.6px;top:171.92px;font-size:4.1px;color:#2a2a2a;font-size:4.4px;-webkit-text-stroke:.12px #2a2a2a;-webkit-text-stroke:.1px #333">16</div><svg style="left:10.00px;top:176.90px" width="5" height="5" viewBox="0 0 5 5"><rect x=".5" y=".3" width="4" height="4.4" fill="#cfe8f8" stroke="#4a9ad8" stroke-width=".4"/><rect x="1.8" y=".3" width="1.4" height="4.4" fill="#4a9ad8"/></svg><div class="t" style="left:16.00px;top:177.72px;font-size:4.1px;color:#1e1e1e;width:41.41px;overflow:hidden;transform:scaleX(.925);transform-origin:0 0;-webkit-text-stroke:.1px #1e1e1e">Hole 2</div><div class="t" style="left:57.6px;top:177.72px;font-size:4.1px;color:#2a2a2a;font-size:4.4px;-webkit-text-stroke:.12px #2a2a2a;-webkit-text-stroke:.1px #333">17</div><svg style="left:10.00px;top:182.70px" width="5" height="5" viewBox="0 0 5 5"><rect x=".5" y=".3" width="4" height="4.4" fill="#cfe8f8" stroke="#4a9ad8" stroke-width=".4"/><rect x="1.8" y=".3" width="1.4" height="4.4" fill="#4a9ad8"/></svg><div class="t" style="left:16.00px;top:183.52px;font-size:4.1px;color:#1e1e1e;width:41.41px;overflow:hidden;transform:scaleX(.925);transform-origin:0 0;-webkit-text-stroke:.1px #1e1e1e">Hole 3</div><div class="t" style="left:57.6px;top:183.52px;font-size:4.1px;color:#2a2a2a;font-size:4.4px;-webkit-text-stroke:.12px #2a2a2a;-webkit-text-stroke:.1px #333">18</div><svg style="left:10.00px;top:188.70px" width="5" height="4.5" viewBox="0 0 5 4.5"><polygon points=".5,2 2,.5 4.5,2.5 3,4" fill="#9ad4f4"/><rect x=".6" y=".6" width="1.2" height="1.2" fill="#ccc"/></svg><div class="t" style="left:16.00px;top:189.32px;font-size:4.1px;color:#1e1e1e;width:41.41px;overflow:hidden;transform:scaleX(.925);transform-origin:0 0;-webkit-text-stroke:.1px #1e1e1e">Chamfer 1</div><div class="t" style="left:57.6px;top:189.32px;font-size:4.1px;color:#2a2a2a;font-size:4.4px;-webkit-text-stroke:.12px #2a2a2a;-webkit-text-stroke:.1px #333">19</div><svg style="left:5.70px;top:195.20px" width="3" height="3" viewBox="0 0 3 3"><polygon points=".5,.3 2.3,1.5 .5,2.7" fill="#555"/></svg><svg style="left:10.00px;top:194.30px" width="5" height="5" viewBox="0 0 5 5"><rect x=".5" y=".4" width="4" height="4.2" fill="#ece8f6" stroke="#9a88d0" stroke-width=".45" stroke-dasharray=".8,.4"/></svg><div class="t" style="left:16.00px;top:195.12px;font-size:4.1px;color:#1e1e1e;width:41.41px;overflow:hidden;transform:scaleX(.925);transform-origin:0 0;-webkit-text-stroke:.1px #1e1e1e">Pattern 8 of Hole 4</div><div class="t" style="left:57.6px;top:195.12px;font-size:4.1px;color:#2a2a2a;font-size:4.4px;-webkit-text-stroke:.12px #2a2a2a;-webkit-text-stroke:.1px #333">20</div><svg style="left:5.70px;top:201.00px" width="3" height="3" viewBox="0 0 3 3"><polygon points=".5,.3 2.3,1.5 .5,2.7" fill="#555"/></svg><svg style="left:10.00px;top:200.10px" width="5" height="5" viewBox="0 0 5 5"><rect x=".5" y=".4" width="4" height="4.2" fill="#ece8f6" stroke="#9a88d0" stroke-width=".45" stroke-dasharray=".8,.4"/></svg><div class="t" style="left:16.00px;top:200.92px;font-size:4.1px;color:#1e1e1e;width:41.41px;overflow:hidden;transform:scaleX(.925);transform-origin:0 0;-webkit-text-stroke:.1px #1e1e1e">Pattern 9 of Hole 5</div><div class="t" style="left:57.6px;top:200.92px;font-size:4.1px;color:#2a2a2a;font-size:4.4px;-webkit-text-stroke:.12px #2a2a2a;-webkit-text-stroke:.1px #333">24</div><div class="r" style="left:10.3px;top:206.3px;width:4px;height:4px;background:#e6e8ea;border:.4px solid #c8ccd0"></div><div class="t" style="left:16.00px;top:206.72px;font-size:4.1px;color:#b9bdc1;width:41.41px;overflow:hidden;transform:scaleX(.925);transform-origin:0 0;-webkit-text-stroke:.1px #b9bdc1">Sketch 29</div><div class="t" style="left:57.6px;top:206.72px;font-size:4.1px;color:#bbb;font-size:4.4px;-webkit-text-stroke:.12px #bbb;-webkit-text-stroke:.1px #bbb">30</div><div class="r" style="left:10.3px;top:212.10000000000002px;width:4px;height:4px;background:#e6e8ea;border:.4px solid #c8ccd0"></div><div class="t" style="left:16.00px;top:212.52px;font-size:4.1px;color:#b9bdc1;width:41.41px;overflow:hidden;transform:scaleX(.925);transform-origin:0 0;-webkit-text-stroke:.1px #b9bdc1">Sketch 30</div><div class="t" style="left:57.6px;top:212.52px;font-size:4.1px;color:#bbb;font-size:4.4px;-webkit-text-stroke:.12px #bbb;-webkit-text-stroke:.1px #bbb">31</div><svg style="left:5.70px;top:218.40px" width="3" height="3" viewBox="0 0 3 3"><polygon points=".5,.3 2.3,1.5 .5,2.7" fill="#555"/></svg><svg style="left:10.00px;top:217.40px" width="5.5" height="5" viewBox="0 0 5.5 5"><polygon points=".3,1.5 1.6,.3 5.2,.3 5.2,3.6 3.9,4.8 .3,4.8" fill="#4aa8e8"/><rect x=".3" y="1.5" width="3.6" height="3.3" fill="#f4f8fb" stroke="#9ab8d0" stroke-width=".3"/></svg><div class="t" style="left:16.00px;top:218.32px;font-size:4.1px;color:#1e1e1e;width:41.41px;overflow:hidden;transform:scaleX(.925);transform-origin:0 0;-webkit-text-stroke:.1px #1e1e1e">Extrude 4</div><div class="t" style="left:57.6px;top:218.32px;font-size:4.1px;color:#2a2a2a;font-size:4.4px;-webkit-text-stroke:.12px #2a2a2a;-webkit-text-stroke:.1px #333">32</div><svg style="left:5.20px;top:224.40px" width="3" height="3" viewBox="0 0 3 3"><polygon points=".2,.5 2.8,.5 1.5,2.4" fill="#444"/></svg><svg style="left:10.00px;top:223.30px" width="5" height="5" viewBox="0 0 5 5"><rect x=".5" y=".4" width="4" height="4.2" fill="#ece8f6" stroke="#9a88d0" stroke-width=".45" stroke-dasharray=".8,.4"/></svg><div class="t" style="left:16.00px;top:224.12px;font-size:4.1px;color:#1e1e1e;width:41.41px;overflow:hidden;transform:scaleX(.925);transform-origin:0 0;-webkit-text-stroke:.1px #1e1e1e">Pattern 10 of LOCAL_GROUP</div><div class="t" style="left:57.6px;top:224.12px;font-size:4.1px;color:#2a2a2a;font-size:4.4px;-webkit-text-stroke:.12px #2a2a2a;-webkit-text-stroke:.1px #333">33</div><svg style="left:11.05px;top:230.20px" width="3" height="3" viewBox="0 0 3 3"><polygon points=".2,.5 2.8,.5 1.5,2.4" fill="#444"/></svg><div class="r" style="left:16.15px;top:229.7px;width:3.5px;height:3.8px;background:#6ab0e0;border-radius:.5px"></div><div class="r" style="left:18.65px;top:229.3px;width:2.2px;height:2.5px;background:#e8b040;border-radius:.5px"></div><div class="t" style="left:21.85px;top:229.92px;font-size:4.1px;color:#1e1e1e;width:35.08px;overflow:hidden;transform:scaleX(.925);transform-origin:0 0;-webkit-text-stroke:.1px #1e1e1e">Group LOCAL_GROUP</div><div class="t" style="left:57.6px;top:229.92px;font-size:4.1px;color:#2a2a2a;font-size:4.4px;-webkit-text-stroke:.12px #2a2a2a;-webkit-text-stroke:.1px #333">34</div><div class="t" style="left:22.2px;top:235.77px;font-size:4px;color:#b08040;font-weight:normal;">⁚*</div><div class="t" style="left:27.70px;top:235.72px;font-size:4.1px;color:#1e1e1e;width:28.76px;overflow:hidden;transform:scaleX(.925);transform-origin:0 0;-webkit-text-stroke:.1px #1e1e1e">PNT1</div><div class="t" style="left:57.6px;top:235.72px;font-size:4.1px;color:#2a2a2a;font-size:4.4px;-webkit-text-stroke:.12px #2a2a2a;-webkit-text-stroke:.1px #333">35</div><div class="r" style="left:23.7px;top:240.90000000000003px;width:0.6px;height:4.4px;background:#b08a50;transform:rotate(20deg)"></div><div class="t" style="left:27.70px;top:241.52px;font-size:4.1px;color:#1e1e1e;width:28.76px;overflow:hidden;transform:scaleX(.925);transform-origin:0 0;-webkit-text-stroke:.1px #1e1e1e">A_24</div><div class="t" style="left:57.6px;top:241.52px;font-size:4.1px;color:#2a2a2a;font-size:4.4px;-webkit-text-stroke:.12px #2a2a2a;-webkit-text-stroke:.1px #333">36</div><div class="r" style="left:23.7px;top:246.7px;width:0.6px;height:4.4px;background:#b08a50;transform:rotate(20deg)"></div><div class="t" style="left:27.70px;top:247.32px;font-size:4.1px;color:#1e1e1e;width:28.76px;overflow:hidden;transform:scaleX(.925);transform-origin:0 0;-webkit-text-stroke:.1px #1e1e1e">A_65</div><div class="t" style="left:57.6px;top:247.32px;font-size:4.1px;color:#2a2a2a;font-size:4.4px;-webkit-text-stroke:.12px #2a2a2a;-webkit-text-stroke:.1px #333">37</div><svg style="left:21.70px;top:252.70px" width="5" height="4" viewBox="0 0 5 4"><polygon points="1.5,.4 4.6,.4 3.5,3.6 .4,3.6" fill="none" stroke="#a07a40" stroke-width=".6"/></svg><div class="t" style="left:27.70px;top:253.12px;font-size:4.1px;color:#1e1e1e;width:28.76px;overflow:hidden;transform:scaleX(.925);transform-origin:0 0;-webkit-text-stroke:.1px #1e1e1e">DTM5</div><div class="t" style="left:57.6px;top:253.12px;font-size:4.1px;color:#2a2a2a;font-size:4.4px;-webkit-text-stroke:.12px #2a2a2a;-webkit-text-stroke:.1px #333">38</div><div class="r" style="left:22.0px;top:258.5px;width:4px;height:4px;background:#e6e8ea;border:.4px solid #c8ccd0"></div><div class="t" style="left:27.70px;top:258.92px;font-size:4.1px;color:#b9bdc1;width:28.76px;overflow:hidden;transform:scaleX(.925);transform-origin:0 0;-webkit-text-stroke:.1px #b9bdc1">Sketch 31</div><div class="t" style="left:57.6px;top:258.92px;font-size:4.1px;color:#bbb;font-size:4.4px;-webkit-text-stroke:.12px #bbb;-webkit-text-stroke:.1px #bbb">39</div><svg style="left:17.40px;top:264.80px" width="3" height="3" viewBox="0 0 3 3"><polygon points=".5,.3 2.3,1.5 .5,2.7" fill="#555"/></svg><div class="r" style="left:22.2px;top:264.8px;width:4px;height:3px;background:#7ac0ea;border-radius:1px"></div><div class="t" style="left:27.70px;top:264.72px;font-size:4.1px;color:#1e1e1e;width:28.76px;overflow:hidden;transform:scaleX(.925);transform-origin:0 0;-webkit-text-stroke:.1px #1e1e1e">Revolve 1</div><div class="t" style="left:57.6px;top:264.72px;font-size:4.1px;color:#2a2a2a;font-size:4.4px;-webkit-text-stroke:.12px #2a2a2a;-webkit-text-stroke:.1px #333">40</div><svg style="left:11.55px;top:270.60px" width="3" height="3" viewBox="0 0 3 3"><polygon points=".5,.3 2.3,1.5 .5,2.7" fill="#555"/></svg><div class="r" style="left:16.15px;top:270.3px;width:3.5px;height:3.8px;background:#6ab0e0;border-radius:.5px"></div><div class="r" style="left:18.65px;top:269.90000000000003px;width:2.2px;height:2.5px;background:#e8b040;border-radius:.5px"></div><div class="t" style="left:21.85px;top:270.52px;font-size:4.1px;color:#1e1e1e;width:35.08px;overflow:hidden;transform:scaleX(.925);transform-origin:0 0;-webkit-text-stroke:.1px #1e1e1e">Group LOCAL_GROUP</div><div class="t" style="left:57.6px;top:270.52px;font-size:4.1px;color:#2a2a2a;font-size:4.4px;-webkit-text-stroke:.12px #2a2a2a;-webkit-text-stroke:.1px #333">41</div><svg style="left:11.55px;top:276.40px" width="3" height="3" viewBox="0 0 3 3"><polygon points=".5,.3 2.3,1.5 .5,2.7" fill="#555"/></svg><div class="r" style="left:16.15px;top:276.09999999999997px;width:3.5px;height:3.8px;background:#6ab0e0;border-radius:.5px"></div><div class="r" style="left:18.65px;top:275.7px;width:2.2px;height:2.5px;background:#e8b040;border-radius:.5px"></div><div class="t" style="left:21.85px;top:276.32px;font-size:4.1px;color:#1e1e1e;width:35.08px;overflow:hidden;transform:scaleX(.925);transform-origin:0 0;-webkit-text-stroke:.1px #1e1e1e">Group LOCAL_GROUP</div><div class="t" style="left:57.6px;top:276.32px;font-size:4.1px;color:#2a2a2a;font-size:4.4px;-webkit-text-stroke:.12px #2a2a2a;-webkit-text-stroke:.1px #333">48</div><svg style="left:11.55px;top:282.20px" width="3" height="3" viewBox="0 0 3 3"><polygon points=".5,.3 2.3,1.5 .5,2.7" fill="#555"/></svg><div class="r" style="left:16.15px;top:281.9px;width:3.5px;height:3.8px;background:#6ab0e0;border-radius:.5px"></div><div class="r" style="left:18.65px;top:281.5px;width:2.2px;height:2.5px;background:#e8b040;border-radius:.5px"></div><div class="t" style="left:21.85px;top:282.12px;font-size:4.1px;color:#1e1e1e;width:35.08px;overflow:hidden;transform:scaleX(.925);transform-origin:0 0;-webkit-text-stroke:.1px #1e1e1e">Group LOCAL_GROUP</div><div class="t" style="left:57.6px;top:282.12px;font-size:4.1px;color:#2a2a2a;font-size:4.4px;-webkit-text-stroke:.12px #2a2a2a;-webkit-text-stroke:.1px #333">55</div><svg style="left:11.55px;top:288.00px" width="3" height="3" viewBox="0 0 3 3"><polygon points=".5,.3 2.3,1.5 .5,2.7" fill="#555"/></svg><div class="r" style="left:16.15px;top:287.7px;width:3.5px;height:3.8px;background:#6ab0e0;border-radius:.5px"></div><div class="r" style="left:18.65px;top:287.3px;width:2.2px;height:2.5px;background:#e8b040;border-radius:.5px"></div><div class="t" style="left:21.85px;top:287.92px;font-size:4.1px;color:#1e1e1e;width:35.08px;overflow:hidden;transform:scaleX(.925);transform-origin:0 0;-webkit-text-stroke:.1px #1e1e1e">Group LOCAL_GROUP</div><div class="t" style="left:57.6px;top:287.92px;font-size:4.1px;color:#2a2a2a;font-size:4.4px;-webkit-text-stroke:.12px #2a2a2a;-webkit-text-stroke:.1px #333">62</div><svg style="left:11.55px;top:293.80px" width="3" height="3" viewBox="0 0 3 3"><polygon points=".5,.3 2.3,1.5 .5,2.7" fill="#555"/></svg><div class="r" style="left:16.15px;top:293.5px;width:3.5px;height:3.8px;background:#6ab0e0;border-radius:.5px"></div><div class="r" style="left:18.65px;top:293.1px;width:2.2px;height:2.5px;background:#e8b040;border-radius:.5px"></div><div class="t" style="left:21.85px;top:293.72px;font-size:4.1px;color:#1e1e1e;width:35.08px;overflow:hidden;transform:scaleX(.925);transform-origin:0 0;-webkit-text-stroke:.1px #1e1e1e">Group LOCAL_GROUP</div><div class="t" style="left:57.6px;top:293.72px;font-size:4.1px;color:#2a2a2a;font-size:4.4px;-webkit-text-stroke:.12px #2a2a2a;-webkit-text-stroke:.1px #333">69</div><svg style="left:11.55px;top:299.60px" width="3" height="3" viewBox="0 0 3 3"><polygon points=".5,.3 2.3,1.5 .5,2.7" fill="#555"/></svg><div class="r" style="left:16.15px;top:299.3px;width:3.5px;height:3.8px;background:#6ab0e0;border-radius:.5px"></div><div class="r" style="left:18.65px;top:298.90000000000003px;width:2.2px;height:2.5px;background:#e8b040;border-radius:.5px"></div><div class="t" style="left:21.85px;top:299.52px;font-size:4.1px;color:#1e1e1e;width:35.08px;overflow:hidden;transform:scaleX(.925);transform-origin:0 0;-webkit-text-stroke:.1px #1e1e1e">Group LOCAL_GROUP</div><div class="t" style="left:57.6px;top:299.52px;font-size:4.1px;color:#2a2a2a;font-size:4.4px;-webkit-text-stroke:.12px #2a2a2a;-webkit-text-stroke:.1px #333">76</div><svg style="left:11.55px;top:305.40px" width="3" height="3" viewBox="0 0 3 3"><polygon points=".5,.3 2.3,1.5 .5,2.7" fill="#555"/></svg><div class="r" style="left:16.15px;top:305.09999999999997px;width:3.5px;height:3.8px;background:#6ab0e0;border-radius:.5px"></div><div class="r" style="left:18.65px;top:304.7px;width:2.2px;height:2.5px;background:#e8b040;border-radius:.5px"></div><div class="t" style="left:21.85px;top:305.32px;font-size:4.1px;color:#1e1e1e;width:35.08px;overflow:hidden;transform:scaleX(.925);transform-origin:0 0;-webkit-text-stroke:.1px #1e1e1e">Group LOCAL_GROUP</div><div class="t" style="left:57.6px;top:305.32px;font-size:4.1px;color:#2a2a2a;font-size:4.4px;-webkit-text-stroke:.12px #2a2a2a;-webkit-text-stroke:.1px #333">83</div><svg style="left:11.55px;top:311.20px" width="3" height="3" viewBox="0 0 3 3"><polygon points=".5,.3 2.3,1.5 .5,2.7" fill="#555"/></svg><div class="r" style="left:16.15px;top:310.9px;width:3.5px;height:3.8px;background:#6ab0e0;border-radius:.5px"></div><div class="r" style="left:18.65px;top:310.5px;width:2.2px;height:2.5px;background:#e8b040;border-radius:.5px"></div><div class="t" style="left:21.85px;top:311.12px;font-size:4.1px;color:#1e1e1e;width:35.08px;overflow:hidden;transform:scaleX(.925);transform-origin:0 0;-webkit-text-stroke:.1px #1e1e1e">Group LOCAL_GROUP</div><div class="t" style="left:57.6px;top:311.12px;font-size:4.1px;color:#2a2a2a;font-size:4.4px;-webkit-text-stroke:.12px #2a2a2a;-webkit-text-stroke:.1px #333">90</div><svg style="left:11.55px;top:317.00px" width="3" height="3" viewBox="0 0 3 3"><polygon points=".5,.3 2.3,1.5 .5,2.7" fill="#555"/></svg><div class="r" style="left:16.15px;top:316.7px;width:3.5px;height:3.8px;background:#6ab0e0;border-radius:.5px"></div><div class="r" style="left:18.65px;top:316.3px;width:2.2px;height:2.5px;background:#e8b040;border-radius:.5px"></div><div class="t" style="left:21.85px;top:316.92px;font-size:4.1px;color:#1e1e1e;width:35.08px;overflow:hidden;transform:scaleX(.925);transform-origin:0 0;-webkit-text-stroke:.1px #1e1e1e">Group LOCAL_GROUP</div><div class="t" style="left:57.6px;top:316.92px;font-size:4.1px;color:#2a2a2a;font-size:4.4px;-webkit-text-stroke:.12px #2a2a2a;-webkit-text-stroke:.1px #333">97</div><div class="r" style="left:11.2px;top:322.8px;width:3px;height:3px;background:#20a020;transform:rotate(45deg)"></div><div class="t" style="left:16.00px;top:322.72px;font-size:4.1px;color:#1e1e1e;width:41.41px;overflow:hidden;transform:scaleX(.925);transform-origin:0 0;-webkit-text-stroke:.1px #1e1e1e">Insert Here</div><svg style="left:5.70px;top:328.60px" width="3" height="3" viewBox="0 0 3 3"><polygon points=".5,.3 2.3,1.5 .5,2.7" fill="#555"/></svg><div class="r" style="left:10.3px;top:327.90000000000003px;width:4.5px;height:4.5px;background:#9ad0f0;border:.4px solid #4aa0d8;transform:skewX(-15deg)"></div><div class="r" style="left:15.5px;top:327.5px;width:16px;height:5.2px;background:#eeeeee;border:.5px solid #cfcfcf"></div><div class="t" style="left:16.00px;top:328.52px;font-size:4.1px;color:#1e1e1e;width:41.41px;overflow:hidden;transform:scaleX(.925);transform-origin:0 0;-webkit-text-stroke:.1px #1e1e1e">Sections</div><div class="t" style="left:55px;top:328.52px;font-size:4.1px;color:#2a2a2a;font-size:4.4px;-webkit-text-stroke:.12px #2a2a2a;-webkit-text-stroke:.1px #333">&lt;None></div><div class="r" style="left:4.5px;top:383.4px;width:49.5px;height:5.1px;background:#eceeef;border:.4px solid #e0e2e4"></div><div class="r" style="left:9px;top:384px;width:32px;height:4px;background:#fdfdfd;border:.4px solid #e6e6e6"></div><div class="r" style="left:55.2px;top:383.4px;width:52px;height:5.1px;background:#eceeef;border:.4px solid #e0e2e4"></div><div class="r" style="left:4.6px;top:383.5px;width:4px;height:4.9px;background:#f6f6f6;border:.4px solid #d8d8d8"></div><div class="r" style="left:49.6px;top:383.5px;width:4px;height:4.9px;background:#f6f6f6;border:.4px solid #d8d8d8"></div><div class="r" style="left:55.3px;top:383.5px;width:4px;height:4.9px;background:#f6f6f6;border:.4px solid #d8d8d8"></div><div class="r" style="left:103px;top:383.5px;width:4px;height:4.9px;background:#f6f6f6;border:.4px solid #d8d8d8"></div><svg style="left:0;top:0" width="999" height="418" viewBox="0 0 999 418"><rect x="108.7" y="48.6" width="889.2" height="335.4" fill="#000"/><defs><clipPath id="vp"><rect x="108.7" y="48.6" width="889.2" height="335.4"/></clipPath><linearGradient id="cg" x1="0" x2="1" y1="0" y2="0"><stop offset="0" stop-color="#6aa2d4"/><stop offset=".06" stop-color="#6aa2d4"/><stop offset=".1" stop-color="#858b92"/><stop offset=".35" stop-color="#959ba1"/><stop offset=".6" stop-color="#a7adb2"/><stop offset=".84" stop-color="#9ca2a7"/><stop offset=".92" stop-color="#6a7075"/><stop offset="1" stop-color="#4a4f54"/></linearGradient><linearGradient id="cg2" x1="0" x2="1" y1="0" y2="0"><stop offset="0" stop-color="#6aa2d4"/><stop offset=".06" stop-color="#6aa2d4"/><stop offset=".1" stop-color="#8a9097"/><stop offset=".4" stop-color="#9aa0a6"/><stop offset=".65" stop-color="#a3a9ae"/><stop offset=".88" stop-color="#8c9298"/><stop offset="1" stop-color="#5a5f64"/></linearGradient></defs><g clip-path="url(#vp)"><polygon points="108.7,191.5 650.3,197.6 726.8,198.9 752.6,200.3 814.1,322.8 813,400 108.7,400" fill="#868b93"/><polygon points="108.7,191.5 650.3,197.6 650.3,201 108.7,194.9" fill="#666b71"/><polygon points="108.7,191.5 650.3,197.6 650.3,198.4 108.7,192.3" fill="#7d8289"/><polygon points="108.7,225.7 650.3,232.5 650.3,235.3 108.7,228.9" fill="#61666c"/><polygon points="108.7,228.9 650.3,235.3 650.3,236.1 108.7,229.7" fill="#7a7f86"/><path d="M650.3,197.6 L726.8,198.9 L752.6,200.3 L814.1,322.8 L799,325.4 L650.3,323.4 Z" fill="#6b7077"/><polygon points="799,325.4 814.1,322.8 813,400 797.6,400" fill="#595e65"/><polygon points="108.7,314 650.3,320.6 799,325.4 799,326.2 650.3,323.6 108.7,317.6" fill="#62676d"/><line x1="649.6" y1="198" x2="649.6" y2="320.5" stroke="#8f949b" stroke-width=".6"/><line x1="652" y1="204" x2="710" y2="320.8" stroke="#4a4e54" stroke-width=".6"/><ellipse cx="725.3" cy="216.5" rx="14.3" ry="1.9" fill="#737880" stroke="#4c5157" stroke-width=".7"/><ellipse cx="727.3" cy="217.2" rx="10.5" ry=".9" fill="#989da3"/><ellipse cx="747.5" cy="261.7" rx="14.3" ry="1.9" fill="#737880" stroke="#4c5157" stroke-width=".7"/><ellipse cx="749.5" cy="262.4" rx="10.5" ry=".9" fill="#989da3"/><ellipse cx="770.6" cy="307.3" rx="14.3" ry="1.9" fill="#737880" stroke="#4c5157" stroke-width=".7"/><ellipse cx="772.6" cy="308.0" rx="10.5" ry=".9" fill="#989da3"/><line x1="725.3" y1="212.5" x2="725.3" y2="372" stroke="#b08a58" stroke-width=".55" stroke-dasharray="4,2" opacity=".75"/><line x1="747.5" y1="257.7" x2="747.5" y2="372" stroke="#b08a58" stroke-width=".55" stroke-dasharray="4,2" opacity=".75"/><line x1="770.6" y1="303.3" x2="770.6" y2="372" stroke="#b08a58" stroke-width=".55" stroke-dasharray="4,2" opacity=".75"/><line x1="668" y1="320.6" x2="771" y2="321.6" stroke="#b08a58" stroke-width=".55" stroke-dasharray="4,2" opacity=".75"/><line x1="686" y1="372" x2="798" y2="372.6" stroke="#b08a58" stroke-width=".55" stroke-dasharray="4,2" opacity=".75"/><polygon points="666.5,290.2 664.4,320.6 669,320.6" fill="#9aa0a6" stroke="#4a4f55" stroke-width=".5"/><polyline points="108.7,211.26 110.2,210.45 111.7,209.59 113.2,208.70 114.7,207.76 116.2,206.79 117.7,205.78 119.2,204.75 120.7,203.69 122.2,202.61 123.7,201.51 125.2,200.39 126.7,199.27 128.2,198.14 129.7,197.01 131.2,195.88 132.7,194.75 134.2,193.63 135.7,192.53 137.2,191.45 138.7,190.38 140.2,189.34 141.7,188.33 143.2,187.35 144.7,186.40 146.2,185.50 147.7,184.63 149.2,183.81 150.7,183.04 152.2,182.31 153.7,181.64 155.2,181.03 156.7,180.47 158.2,179.97 159.7,179.53 161.2,179.15 162.7,178.84 164.2,178.59 165.7,178.40 167.2,178.29 168.7,178.23 170.2,178.25 171.7,178.33 173.2,178.48 174.7,178.69 176.2,178.97 177.7,179.31 179.2,179.72 180.7,180.19 182.2,180.71 183.7,181.30 185.2,181.94 186.7,182.64 188.2,183.38 189.7,184.18 191.2,185.02 192.7,185.91 194.2,186.83 195.7,187.79 197.2,188.79 198.7,189.82 200.2,190.87 201.7,191.95 203.2,193.05 204.7,194.16 206.2,195.28 207.7,196.42 209.2,197.56 210.7,198.69 212.2,199.83 213.7,200.96 215.2,202.07 216.7,203.17 218.2,204.26 219.7,205.32 221.2,206.35 222.7,207.36 224.2,208.33 225.7,209.27 227.2,210.17 228.7,211.02 230.2,211.83 231.7,212.59 233.2,213.30 234.7,213.96 236.2,214.57 237.7,215.11 239.2,215.60 240.7,216.03 242.2,216.39 243.7,216.70 245.2,216.94 246.7,217.11 248.2,217.22 249.7,217.26 251.2,217.24 252.7,217.15 254.2,217.00 255.7,216.78 257.2,216.50 258.7,216.16 260.2,215.75 261.7,215.29 263.2,214.77 264.7,214.19 266.2,213.55 267.7,212.87 269.2,212.13 270.7,211.35 272.2,210.52 273.7,209.66 275.2,208.75 276.7,207.81 278.2,206.84 279.7,205.84 281.2,204.81 282.7,203.76 284.2,202.70 285.7,201.62 287.2,200.53 288.7,199.44 290.2,198.34 291.7,197.24 293.2,196.15 294.7,195.07 296.2,194.00 297.7,192.95 299.2,191.92 300.7,190.91 302.2,189.92 303.7,188.97 305.2,188.05 306.7,187.17 308.2,186.33 309.7,185.53 311.2,184.78 312.7,184.08 314.2,183.42 315.7,182.82 317.2,182.28 318.7,181.79 320.2,181.36 321.7,180.99 323.2,180.68 324.7,180.44 326.2,180.25 327.7,180.14 329.2,180.08 330.7,180.09 332.2,180.17 333.7,180.31 335.2,180.51 336.7,180.78 338.2,181.11 339.7,181.50 341.2,181.95 342.7,182.45 344.2,183.02 345.7,183.64 347.2,184.31 348.7,185.03 350.2,185.80 351.7,186.61 353.2,187.47 354.7,188.36 356.2,189.29 357.7,190.26 359.2,191.25 360.7,192.27 362.2,193.31 363.7,194.38 365.2,195.45 366.7,196.54 368.2,197.64 369.7,198.75 371.2,199.85 372.7,200.95 374.2,202.04 375.7,203.13 377.2,204.19 378.7,205.25 380.2,206.28 381.7,207.28 383.2,208.26 384.7,209.20 386.2,210.11 387.7,210.98 389.2,211.82 390.7,212.60 392.2,213.35 393.7,214.04 395.2,214.68 396.7,215.27 398.2,215.80 399.7,216.28 401.2,216.70 402.7,217.06 404.2,217.36 405.7,217.59 407.2,217.76 408.7,217.87 410.2,217.92 411.7,217.90 413.2,217.82 414.7,217.68 416.2,217.47 417.7,217.20 419.2,216.88 420.7,216.49 422.2,216.04 423.7,215.54 425.2,214.98 426.7,214.37 428.2,213.71 429.7,213.00 431.2,212.25 432.7,211.45 434.2,210.61 435.7,209.74 437.2,208.83 438.7,207.89 440.2,206.92 441.7,205.93 443.2,204.92 444.7,203.89 446.2,202.85 447.7,201.79 449.2,200.73 450.7,199.67 452.2,198.61 453.7,197.55 455.2,196.50 456.7,195.47 458.2,194.45 459.7,193.44 461.2,192.47 462.7,191.51 464.2,190.59 465.7,189.70 467.2,188.84 468.7,188.03 470.2,187.25 471.7,186.52 473.2,185.83 474.7,185.20 476.2,184.61 477.7,184.08 479.2,183.61 480.7,183.19 482.2,182.83 483.7,182.53 485.2,182.28 486.7,182.10 488.2,181.99 489.7,181.93 491.2,181.94 492.7,182.01 494.2,182.14 495.7,182.33 497.2,182.59 498.7,182.90 500.2,183.27 501.7,183.71 503.2,184.20 504.7,184.74 506.2,185.33 507.7,185.98 509.2,186.68 510.7,187.42 512.2,188.20 513.7,189.03 515.2,189.89 516.7,190.79 518.2,191.73 519.7,192.69 521.2,193.67 522.7,194.68 524.2,195.71 525.7,196.75 527.2,197.81 528.7,198.87 530.2,199.94 531.7,201.01 533.2,202.07 534.7,203.13 536.2,204.18 537.7,205.22 539.2,206.24 540.7,207.24 542.2,208.21 543.7,209.16 545.2,210.08 546.7,210.96 548.2,211.81 549.7,212.61 551.2,213.38 552.7,214.10 554.2,214.78 555.7,215.40 557.2,215.98 558.7,216.50 560.2,216.96 561.7,217.37 563.2,217.72 564.7,218.01 566.2,218.25 567.7,218.42 569.2,218.53 570.7,218.58 572.2,218.57 573.7,218.49 575.2,218.36 576.7,218.16 578.2,217.91 579.7,217.59 581.2,217.22 582.7,216.79 584.2,216.31 585.7,215.78 587.2,215.19 588.7,214.55 590.2,213.87 591.7,213.14 593.2,212.38 594.7,211.57 596.2,210.72 597.7,209.85 599.2,208.94 600.7,208.01 602.2,207.05 603.7,206.07 605.2,205.07 606.7,204.07 608.2,203.05 609.7,202.02 611.2,200.99 612.7,199.97 614.2,198.95 615.7,197.93 617.2,196.93 618.7,195.94 620.2,194.97 621.7,194.02 623.2,193.10 624.7,192.20 626.2,191.34 627.7,190.51 629.2,189.72 630.7,188.96 632.2,188.25 633.7,187.59 635.2,186.97 636.7,186.40 638.2,185.89 639.7,185.42 641.2,185.02 642.7,184.66 644.2,184.37 645.7,184.13 647.2,183.95 648.7,183.84 650.2,183.78" fill="none" stroke="#42429e" stroke-width=".8"/><line x1="537.4" y1="204" x2="537.4" y2="252" stroke="#b08a58" stroke-width=".55" stroke-dasharray="4,2" opacity=".75"/><line x1="553" y1="213" x2="553" y2="261" stroke="#b08a58" stroke-width=".55" stroke-dasharray="4,2" opacity=".75"/><line x1="570.3" y1="218.4" x2="570.3" y2="266.4" stroke="#b08a58" stroke-width=".55" stroke-dasharray="4,2" opacity=".75"/><line x1="588" y1="214.5" x2="588" y2="262.5" stroke="#b08a58" stroke-width=".55" stroke-dasharray="4,2" opacity=".75"/><line x1="603.8" y1="205.9" x2="603.8" y2="253.9" stroke="#b08a58" stroke-width=".55" stroke-dasharray="4,2" opacity=".75"/><polygon points="537.40,204.00 531.10,127.00 532.27,127.00" fill="#758fa8" stroke="#758fa8" stroke-width=".25"/><polygon points="537.40,204.00 532.27,127.00 533.44,127.00" fill="#80878f" stroke="#80878f" stroke-width=".25"/><polygon points="537.40,204.00 533.44,127.00 534.61,127.00" fill="#858c93" stroke="#858c93" stroke-width=".25"/><polygon points="537.40,204.00 534.61,127.00 535.79,127.00" fill="#8a9097" stroke="#8a9097" stroke-width=".25"/><polygon points="537.40,204.00 535.79,127.00 536.96,127.00" fill="#8f959b" stroke="#8f959b" stroke-width=".25"/><polygon points="537.40,204.00 536.96,127.00 538.13,127.00" fill="#9399a0" stroke="#9399a0" stroke-width=".25"/><polygon points="537.40,204.00 538.13,127.00 539.30,127.00" fill="#989ea4" stroke="#989ea4" stroke-width=".25"/><polygon points="537.40,204.00 539.30,127.00 540.47,127.00" fill="#9aa0a6" stroke="#9aa0a6" stroke-width=".25"/><polygon points="537.40,204.00 540.47,127.00 541.64,127.00" fill="#999fa5" stroke="#999fa5" stroke-width=".25"/><polygon points="537.40,204.00 541.64,127.00 542.81,127.00" fill="#989ea4" stroke="#989ea4" stroke-width=".25"/><polygon points="537.40,204.00 542.81,127.00 543.99,127.00" fill="#92989e" stroke="#92989e" stroke-width=".25"/><polygon points="537.40,204.00 543.99,127.00 545.16,127.00" fill="#868c92" stroke="#868c92" stroke-width=".25"/><polygon points="537.40,204.00 545.16,127.00 546.33,127.00" fill="#73787e" stroke="#73787e" stroke-width=".25"/><polygon points="537.40,204.00 546.33,127.00 547.50,127.00" fill="#575c61" stroke="#575c61" stroke-width=".25"/><ellipse cx="539.3" cy="127" rx="8.2" ry="1.2" fill="#9da4ab"/><path d="M531.0999999999999,127 A8.2,1.2 0 0 1 547.5,127" fill="none" stroke="#7aa6d0" stroke-width=".4"/><line x1="531.3" y1="127" x2="537.4" y2="204" stroke="#5f9bd2" stroke-width=".45"/><line x1="539.3" y1="122" x2="537.4" y2="204" stroke="#b08a58" stroke-width=".55" stroke-dasharray="4,2" opacity=".75"/><line x1="525.4" y1="204" x2="549.4" y2="204" stroke="#b08a58" stroke-width=".55" stroke-dasharray="4,2" opacity=".75"/><polygon points="553.00,213.00 546.70,135.80 547.86,135.80" fill="#758fa8" stroke="#758fa8" stroke-width=".25"/><polygon points="553.00,213.00 547.86,135.80 549.01,135.80" fill="#80878f" stroke="#80878f" stroke-width=".25"/><polygon points="553.00,213.00 549.01,135.80 550.17,135.80" fill="#858c93" stroke="#858c93" stroke-width=".25"/><polygon points="553.00,213.00 550.17,135.80 551.33,135.80" fill="#8a9097" stroke="#8a9097" stroke-width=".25"/><polygon points="553.00,213.00 551.33,135.80 552.49,135.80" fill="#8f959b" stroke="#8f959b" stroke-width=".25"/><polygon points="553.00,213.00 552.49,135.80 553.64,135.80" fill="#9399a0" stroke="#9399a0" stroke-width=".25"/><polygon points="553.00,213.00 553.64,135.80 554.80,135.80" fill="#989ea4" stroke="#989ea4" stroke-width=".25"/><polygon points="553.00,213.00 554.80,135.80 555.96,135.80" fill="#9aa0a6" stroke="#9aa0a6" stroke-width=".25"/><polygon points="553.00,213.00 555.96,135.80 557.11,135.80" fill="#999fa5" stroke="#999fa5" stroke-width=".25"/><polygon points="553.00,213.00 557.11,135.80 558.27,135.80" fill="#989ea4" stroke="#989ea4" stroke-width=".25"/><polygon points="553.00,213.00 558.27,135.80 559.43,135.80" fill="#92989e" stroke="#92989e" stroke-width=".25"/><polygon points="553.00,213.00 559.43,135.80 560.59,135.80" fill="#868c92" stroke="#868c92" stroke-width=".25"/><polygon points="553.00,213.00 560.59,135.80 561.74,135.80" fill="#73787e" stroke="#73787e" stroke-width=".25"/><polygon points="553.00,213.00 561.74,135.80 562.90,135.80" fill="#575c61" stroke="#575c61" stroke-width=".25"/><ellipse cx="554.8" cy="135.8" rx="8.1" ry="1.2" fill="#9da4ab"/><path d="M546.6999999999999,135.8 A8.1,1.2 0 0 1 562.9,135.8" fill="none" stroke="#7aa6d0" stroke-width=".4"/><line x1="546.9" y1="135.8" x2="553" y2="213" stroke="#5f9bd2" stroke-width=".45"/><line x1="554.8" y1="130.8" x2="553" y2="213" stroke="#b08a58" stroke-width=".55" stroke-dasharray="4,2" opacity=".75"/><line x1="541" y1="213" x2="565" y2="213" stroke="#b08a58" stroke-width=".55" stroke-dasharray="4,2" opacity=".75"/><polygon points="570.30,218.40 564.20,140.30 565.34,140.30" fill="#758fa8" stroke="#758fa8" stroke-width=".25"/><polygon points="570.30,218.40 565.34,140.30 566.49,140.30" fill="#80878f" stroke="#80878f" stroke-width=".25"/><polygon points="570.30,218.40 566.49,140.30 567.63,140.30" fill="#858c93" stroke="#858c93" stroke-width=".25"/><polygon points="570.30,218.40 567.63,140.30 568.77,140.30" fill="#8a9097" stroke="#8a9097" stroke-width=".25"/><polygon points="570.30,218.40 568.77,140.30 569.91,140.30" fill="#8f959b" stroke="#8f959b" stroke-width=".25"/><polygon points="570.30,218.40 569.91,140.30 571.06,140.30" fill="#9399a0" stroke="#9399a0" stroke-width=".25"/><polygon points="570.30,218.40 571.06,140.30 572.20,140.30" fill="#989ea4" stroke="#989ea4" stroke-width=".25"/><polygon points="570.30,218.40 572.20,140.30 573.34,140.30" fill="#9aa0a6" stroke="#9aa0a6" stroke-width=".25"/><polygon points="570.30,218.40 573.34,140.30 574.49,140.30" fill="#999fa5" stroke="#999fa5" stroke-width=".25"/><polygon points="570.30,218.40 574.49,140.30 575.63,140.30" fill="#989ea4" stroke="#989ea4" stroke-width=".25"/><polygon points="570.30,218.40 575.63,140.30 576.77,140.30" fill="#92989e" stroke="#92989e" stroke-width=".25"/><polygon points="570.30,218.40 576.77,140.30 577.91,140.30" fill="#868c92" stroke="#868c92" stroke-width=".25"/><polygon points="570.30,218.40 577.91,140.30 579.06,140.30" fill="#73787e" stroke="#73787e" stroke-width=".25"/><polygon points="570.30,218.40 579.06,140.30 580.20,140.30" fill="#575c61" stroke="#575c61" stroke-width=".25"/><ellipse cx="572.2" cy="140.3" rx="8" ry="1.2" fill="#9da4ab"/><path d="M564.2,140.3 A8,1.2 0 0 1 580.2,140.3" fill="none" stroke="#7aa6d0" stroke-width=".4"/><line x1="564.4000000000001" y1="140.3" x2="570.3" y2="218.4" stroke="#5f9bd2" stroke-width=".45"/><line x1="572.2" y1="135.3" x2="570.3" y2="218.4" stroke="#b08a58" stroke-width=".55" stroke-dasharray="4,2" opacity=".75"/><line x1="558.3" y1="218.4" x2="582.3" y2="218.4" stroke="#b08a58" stroke-width=".55" stroke-dasharray="4,2" opacity=".75"/><polygon points="588.00,214.50 581.50,136.30 582.63,136.30" fill="#758fa8" stroke="#758fa8" stroke-width=".25"/><polygon points="588.00,214.50 582.63,136.30 583.76,136.30" fill="#80878f" stroke="#80878f" stroke-width=".25"/><polygon points="588.00,214.50 583.76,136.30 584.89,136.30" fill="#858c93" stroke="#858c93" stroke-width=".25"/><polygon points="588.00,214.50 584.89,136.30 586.01,136.30" fill="#8a9097" stroke="#8a9097" stroke-width=".25"/><polygon points="588.00,214.50 586.01,136.30 587.14,136.30" fill="#8f959b" stroke="#8f959b" stroke-width=".25"/><polygon points="588.00,214.50 587.14,136.30 588.27,136.30" fill="#9399a0" stroke="#9399a0" stroke-width=".25"/><polygon points="588.00,214.50 588.27,136.30 589.40,136.30" fill="#989ea4" stroke="#989ea4" stroke-width=".25"/><polygon points="588.00,214.50 589.40,136.30 590.53,136.30" fill="#9aa0a6" stroke="#9aa0a6" stroke-width=".25"/><polygon points="588.00,214.50 590.53,136.30 591.66,136.30" fill="#999fa5" stroke="#999fa5" stroke-width=".25"/><polygon points="588.00,214.50 591.66,136.30 592.79,136.30" fill="#989ea4" stroke="#989ea4" stroke-width=".25"/><polygon points="588.00,214.50 592.79,136.30 593.91,136.30" fill="#92989e" stroke="#92989e" stroke-width=".25"/><polygon points="588.00,214.50 593.91,136.30 595.04,136.30" fill="#868c92" stroke="#868c92" stroke-width=".25"/><polygon points="588.00,214.50 595.04,136.30 596.17,136.30" fill="#73787e" stroke="#73787e" stroke-width=".25"/><polygon points="588.00,214.50 596.17,136.30 597.30,136.30" fill="#575c61" stroke="#575c61" stroke-width=".25"/><ellipse cx="589.4" cy="136.3" rx="7.9" ry="1.2" fill="#9da4ab"/><path d="M581.5,136.3 A7.9,1.2 0 0 1 597.3,136.3" fill="none" stroke="#7aa6d0" stroke-width=".4"/><line x1="581.7" y1="136.3" x2="588" y2="214.5" stroke="#5f9bd2" stroke-width=".45"/><line x1="589.4" y1="131.3" x2="588" y2="214.5" stroke="#b08a58" stroke-width=".55" stroke-dasharray="4,2" opacity=".75"/><line x1="576" y1="214.5" x2="600" y2="214.5" stroke="#b08a58" stroke-width=".55" stroke-dasharray="4,2" opacity=".75"/><polygon points="603.80,205.90 597.30,127.60 598.44,127.60" fill="#758fa8" stroke="#758fa8" stroke-width=".25"/><polygon points="603.80,205.90 598.44,127.60 599.59,127.60" fill="#80878f" stroke="#80878f" stroke-width=".25"/><polygon points="603.80,205.90 599.59,127.60 600.73,127.60" fill="#858c93" stroke="#858c93" stroke-width=".25"/><polygon points="603.80,205.90 600.73,127.60 601.87,127.60" fill="#8a9097" stroke="#8a9097" stroke-width=".25"/><polygon points="603.80,205.90 601.87,127.60 603.01,127.60" fill="#8f959b" stroke="#8f959b" stroke-width=".25"/><polygon points="603.80,205.90 603.01,127.60 604.16,127.60" fill="#9399a0" stroke="#9399a0" stroke-width=".25"/><polygon points="603.80,205.90 604.16,127.60 605.30,127.60" fill="#989ea4" stroke="#989ea4" stroke-width=".25"/><polygon points="603.80,205.90 605.30,127.60 606.44,127.60" fill="#9aa0a6" stroke="#9aa0a6" stroke-width=".25"/><polygon points="603.80,205.90 606.44,127.60 607.59,127.60" fill="#999fa5" stroke="#999fa5" stroke-width=".25"/><polygon points="603.80,205.90 607.59,127.60 608.73,127.60" fill="#989ea4" stroke="#989ea4" stroke-width=".25"/><polygon points="603.80,205.90 608.73,127.60 609.87,127.60" fill="#92989e" stroke="#92989e" stroke-width=".25"/><polygon points="603.80,205.90 609.87,127.60 611.01,127.60" fill="#868c92" stroke="#868c92" stroke-width=".25"/><polygon points="603.80,205.90 611.01,127.60 612.16,127.60" fill="#73787e" stroke="#73787e" stroke-width=".25"/><polygon points="603.80,205.90 612.16,127.60 613.30,127.60" fill="#575c61" stroke="#575c61" stroke-width=".25"/><ellipse cx="605.3" cy="127.6" rx="8" ry="1.2" fill="#9da4ab"/><path d="M597.3,127.6 A8,1.2 0 0 1 613.3,127.6" fill="none" stroke="#7aa6d0" stroke-width=".4"/><line x1="597.5" y1="127.6" x2="603.8" y2="205.9" stroke="#5f9bd2" stroke-width=".45"/><line x1="605.3" y1="122.6" x2="603.8" y2="205.9" stroke="#b08a58" stroke-width=".55" stroke-dasharray="4,2" opacity=".75"/><line x1="591.8" y1="205.9" x2="615.8" y2="205.9" stroke="#b08a58" stroke-width=".55" stroke-dasharray="4,2" opacity=".75"/><polygon points="507.90,186.80 499.00,267.00 500.14,267.36" fill="#758fa8" stroke="#758fa8" stroke-width=".25"/><polygon points="507.90,186.80 500.14,267.36 501.29,267.69" fill="#80878f" stroke="#80878f" stroke-width=".25"/><polygon points="507.90,186.80 501.29,267.69 502.43,268.00" fill="#858c93" stroke="#858c93" stroke-width=".25"/><polygon points="507.90,186.80 502.43,268.00 503.57,268.25" fill="#8a9097" stroke="#8a9097" stroke-width=".25"/><polygon points="507.90,186.80 503.57,268.25 504.71,268.44" fill="#8f959b" stroke="#8f959b" stroke-width=".25"/><polygon points="507.90,186.80 504.71,268.44 505.86,268.56" fill="#9399a0" stroke="#9399a0" stroke-width=".25"/><polygon points="507.90,186.80 505.86,268.56 507.00,268.60" fill="#989ea4" stroke="#989ea4" stroke-width=".25"/><polygon points="507.90,186.80 507.00,268.60 508.14,268.56" fill="#9aa0a6" stroke="#9aa0a6" stroke-width=".25"/><polygon points="507.90,186.80 508.14,268.56 509.29,268.44" fill="#999fa5" stroke="#999fa5" stroke-width=".25"/><polygon points="507.90,186.80 509.29,268.44 510.43,268.25" fill="#989ea4" stroke="#989ea4" stroke-width=".25"/><polygon points="507.90,186.80 510.43,268.25 511.57,268.00" fill="#92989e" stroke="#92989e" stroke-width=".25"/><polygon points="507.90,186.80 511.57,268.00 512.71,267.69" fill="#868c92" stroke="#868c92" stroke-width=".25"/><polygon points="507.90,186.80 512.71,267.69 513.86,267.36" fill="#73787e" stroke="#73787e" stroke-width=".25"/><polygon points="507.90,186.80 513.86,267.36 515.00,267.00" fill="#575c61" stroke="#575c61" stroke-width=".25"/><path d="M515,267 A8,1.6 0 0 1 499,267" fill="none" stroke="#5c6166" stroke-width=".6"/><line x1="499.2" y1="267" x2="507.9" y2="186.8" stroke="#5f9bd2" stroke-width=".45"/><line x1="507.9" y1="182.8" x2="507" y2="272" stroke="#b08a58" stroke-width=".55" stroke-dasharray="4,2" opacity=".75"/><line x1="495.9" y1="187.3" x2="519.9" y2="187.3" stroke="#b08a58" stroke-width=".55" stroke-dasharray="4,2" opacity=".75"/><polygon points="523.70,194.70 514.70,275.00 515.87,275.36" fill="#758fa8" stroke="#758fa8" stroke-width=".25"/><polygon points="523.70,194.70 515.87,275.36 517.04,275.69" fill="#80878f" stroke="#80878f" stroke-width=".25"/><polygon points="523.70,194.70 517.04,275.69 518.21,276.00" fill="#858c93" stroke="#858c93" stroke-width=".25"/><polygon points="523.70,194.70 518.21,276.00 519.39,276.25" fill="#8a9097" stroke="#8a9097" stroke-width=".25"/><polygon points="523.70,194.70 519.39,276.25 520.56,276.44" fill="#8f959b" stroke="#8f959b" stroke-width=".25"/><polygon points="523.70,194.70 520.56,276.44 521.73,276.56" fill="#9399a0" stroke="#9399a0" stroke-width=".25"/><polygon points="523.70,194.70 521.73,276.56 522.90,276.60" fill="#989ea4" stroke="#989ea4" stroke-width=".25"/><polygon points="523.70,194.70 522.90,276.60 524.07,276.56" fill="#9aa0a6" stroke="#9aa0a6" stroke-width=".25"/><polygon points="523.70,194.70 524.07,276.56 525.24,276.44" fill="#999fa5" stroke="#999fa5" stroke-width=".25"/><polygon points="523.70,194.70 525.24,276.44 526.41,276.25" fill="#989ea4" stroke="#989ea4" stroke-width=".25"/><polygon points="523.70,194.70 526.41,276.25 527.59,276.00" fill="#92989e" stroke="#92989e" stroke-width=".25"/><polygon points="523.70,194.70 527.59,276.00 528.76,275.69" fill="#868c92" stroke="#868c92" stroke-width=".25"/><polygon points="523.70,194.70 528.76,275.69 529.93,275.36" fill="#73787e" stroke="#73787e" stroke-width=".25"/><polygon points="523.70,194.70 529.93,275.36 531.10,275.00" fill="#575c61" stroke="#575c61" stroke-width=".25"/><path d="M531.1,275 A8.2,1.6 0 0 1 514.6999999999999,275" fill="none" stroke="#5c6166" stroke-width=".6"/><line x1="514.9" y1="275" x2="523.7" y2="194.7" stroke="#5f9bd2" stroke-width=".45"/><line x1="523.7" y1="190.7" x2="522.9" y2="280" stroke="#b08a58" stroke-width=".55" stroke-dasharray="4,2" opacity=".75"/><line x1="511.70000000000005" y1="195.2" x2="535.7" y2="195.2" stroke="#b08a58" stroke-width=".55" stroke-dasharray="4,2" opacity=".75"/><polygon points="618.70,197.30 609.10,276.80 610.27,277.16" fill="#758fa8" stroke="#758fa8" stroke-width=".25"/><polygon points="618.70,197.30 610.27,277.16 611.44,277.49" fill="#80878f" stroke="#80878f" stroke-width=".25"/><polygon points="618.70,197.30 611.44,277.49 612.61,277.80" fill="#858c93" stroke="#858c93" stroke-width=".25"/><polygon points="618.70,197.30 612.61,277.80 613.79,278.05" fill="#8a9097" stroke="#8a9097" stroke-width=".25"/><polygon points="618.70,197.30 613.79,278.05 614.96,278.24" fill="#8f959b" stroke="#8f959b" stroke-width=".25"/><polygon points="618.70,197.30 614.96,278.24 616.13,278.36" fill="#9399a0" stroke="#9399a0" stroke-width=".25"/><polygon points="618.70,197.30 616.13,278.36 617.30,278.40" fill="#989ea4" stroke="#989ea4" stroke-width=".25"/><polygon points="618.70,197.30 617.30,278.40 618.47,278.36" fill="#9aa0a6" stroke="#9aa0a6" stroke-width=".25"/><polygon points="618.70,197.30 618.47,278.36 619.64,278.24" fill="#999fa5" stroke="#999fa5" stroke-width=".25"/><polygon points="618.70,197.30 619.64,278.24 620.81,278.05" fill="#989ea4" stroke="#989ea4" stroke-width=".25"/><polygon points="618.70,197.30 620.81,278.05 621.99,277.80" fill="#92989e" stroke="#92989e" stroke-width=".25"/><polygon points="618.70,197.30 621.99,277.80 623.16,277.49" fill="#868c92" stroke="#868c92" stroke-width=".25"/><polygon points="618.70,197.30 623.16,277.49 624.33,277.16" fill="#73787e" stroke="#73787e" stroke-width=".25"/><polygon points="618.70,197.30 624.33,277.16 625.50,276.80" fill="#575c61" stroke="#575c61" stroke-width=".25"/><path d="M625.5,276.8 A8.2,1.6 0 0 1 609.0999999999999,276.8" fill="none" stroke="#5c6166" stroke-width=".6"/><line x1="609.3" y1="276.8" x2="618.7" y2="197.3" stroke="#5f9bd2" stroke-width=".45"/><line x1="618.7" y1="193.3" x2="617.3" y2="281.8" stroke="#b08a58" stroke-width=".55" stroke-dasharray="4,2" opacity=".75"/><line x1="606.7" y1="197.8" x2="630.7" y2="197.8" stroke="#b08a58" stroke-width=".55" stroke-dasharray="4,2" opacity=".75"/><polygon points="634.50,187.20 625.70,268.20 626.83,268.56" fill="#758fa8" stroke="#758fa8" stroke-width=".25"/><polygon points="634.50,187.20 626.83,268.56 627.96,268.89" fill="#80878f" stroke="#80878f" stroke-width=".25"/><polygon points="634.50,187.20 627.96,268.89 629.09,269.20" fill="#858c93" stroke="#858c93" stroke-width=".25"/><polygon points="634.50,187.20 629.09,269.20 630.21,269.45" fill="#8a9097" stroke="#8a9097" stroke-width=".25"/><polygon points="634.50,187.20 630.21,269.45 631.34,269.64" fill="#8f959b" stroke="#8f959b" stroke-width=".25"/><polygon points="634.50,187.20 631.34,269.64 632.47,269.76" fill="#9399a0" stroke="#9399a0" stroke-width=".25"/><polygon points="634.50,187.20 632.47,269.76 633.60,269.80" fill="#989ea4" stroke="#989ea4" stroke-width=".25"/><polygon points="634.50,187.20 633.60,269.80 634.73,269.76" fill="#9aa0a6" stroke="#9aa0a6" stroke-width=".25"/><polygon points="634.50,187.20 634.73,269.76 635.86,269.64" fill="#999fa5" stroke="#999fa5" stroke-width=".25"/><polygon points="634.50,187.20 635.86,269.64 636.99,269.45" fill="#989ea4" stroke="#989ea4" stroke-width=".25"/><polygon points="634.50,187.20 636.99,269.45 638.11,269.20" fill="#92989e" stroke="#92989e" stroke-width=".25"/><polygon points="634.50,187.20 638.11,269.20 639.24,268.89" fill="#868c92" stroke="#868c92" stroke-width=".25"/><polygon points="634.50,187.20 639.24,268.89 640.37,268.56" fill="#73787e" stroke="#73787e" stroke-width=".25"/><polygon points="634.50,187.20 640.37,268.56 641.50,268.20" fill="#575c61" stroke="#575c61" stroke-width=".25"/><path d="M641.5,268.2 A7.9,1.6 0 0 1 625.7,268.2" fill="none" stroke="#5c6166" stroke-width=".6"/><line x1="625.9000000000001" y1="268.2" x2="634.5" y2="187.2" stroke="#5f9bd2" stroke-width=".45"/><line x1="634.5" y1="183.2" x2="633.6" y2="273.2" stroke="#b08a58" stroke-width=".55" stroke-dasharray="4,2" opacity=".75"/><line x1="622.5" y1="187.7" x2="646.5" y2="187.7" stroke="#b08a58" stroke-width=".55" stroke-dasharray="4,2" opacity=".75"/><clipPath id="ce"><rect x="600" y="150" width="50.4" height="130"/></clipPath><g clip-path="url(#ce)"><polygon points="651.70,182.50 639.40,263.50 640.54,263.86" fill="#758fa8" stroke="#758fa8" stroke-width=".25"/><polygon points="651.70,182.50 640.54,263.86 641.69,264.19" fill="#80878f" stroke="#80878f" stroke-width=".25"/><polygon points="651.70,182.50 641.69,264.19 642.83,264.50" fill="#858c93" stroke="#858c93" stroke-width=".25"/><polygon points="651.70,182.50 642.83,264.50 643.97,264.75" fill="#8a9097" stroke="#8a9097" stroke-width=".25"/><polygon points="651.70,182.50 643.97,264.75 645.11,264.94" fill="#8f959b" stroke="#8f959b" stroke-width=".25"/><polygon points="651.70,182.50 645.11,264.94 646.26,265.06" fill="#9399a0" stroke="#9399a0" stroke-width=".25"/><polygon points="651.70,182.50 646.26,265.06 647.40,265.10" fill="#989ea4" stroke="#989ea4" stroke-width=".25"/><polygon points="651.70,182.50 647.40,265.10 648.54,265.06" fill="#9aa0a6" stroke="#9aa0a6" stroke-width=".25"/><polygon points="651.70,182.50 648.54,265.06 649.69,264.94" fill="#999fa5" stroke="#999fa5" stroke-width=".25"/><polygon points="651.70,182.50 649.69,264.94 650.83,264.75" fill="#989ea4" stroke="#989ea4" stroke-width=".25"/><polygon points="651.70,182.50 650.83,264.75 651.97,264.50" fill="#92989e" stroke="#92989e" stroke-width=".25"/><polygon points="651.70,182.50 651.97,264.50 653.11,264.19" fill="#868c92" stroke="#868c92" stroke-width=".25"/><polygon points="651.70,182.50 653.11,264.19 654.26,263.86" fill="#73787e" stroke="#73787e" stroke-width=".25"/><polygon points="651.70,182.50 654.26,263.86 655.40,263.50" fill="#575c61" stroke="#575c61" stroke-width=".25"/></g><line x1="640" y1="184.7" x2="667" y2="184.7" stroke="#b08a58" stroke-width=".55" stroke-dasharray="4,2" opacity=".75"/></g><text x="948.5" y="358.7" font-size="6.4" fill="#ececec" text-anchor="middle" font-family="Liberation Sans">X.X+-0.1</text><text x="948.5" y="366.0" font-size="6.4" fill="#ececec" text-anchor="middle" font-family="Liberation Sans">X.XX+-0.01</text><text x="948.5" y="373.3" font-size="6.4" fill="#ececec" text-anchor="middle" font-family="Liberation Sans">X.XXX+-0.001</text><text x="929.7" y="380.8" font-size="6.4" fill="#ececec" font-family="Liberation Sans">ANG.+-0.5</text><rect x="512.1" y="51.2" width="82.2" height="7.6" fill="#f8f9fa"/><g transform="translate(517.4,55)"><rect x="-2.3" y="-2.2" width="4.6" height="4.4" fill="#e4e4e4" stroke="#c8c8c8" stroke-width=".3"/><circle cx="0" cy="-.2" r="1.2" fill="#9ad0f0" stroke="#4a9ad0" stroke-width=".3"/></g><g transform="translate(525.5,55)"><circle cx="-.5" cy="-.7" r="1.5" fill="#3a8ac8" stroke="#2a6aa8" stroke-width=".3"/><line x1=".5" y1=".4" x2="2.2" y2="2.2" stroke="#888" stroke-width=".7"/></g><g transform="translate(533.3,55)"><circle cx="-.5" cy="-.7" r="1.5" fill="#8ac4e8" stroke="#5aa0d0" stroke-width=".3"/><line x1=".5" y1=".4" x2="2.2" y2="2.2" stroke="#999" stroke-width=".7"/></g><g transform="translate(541,55)"><rect x="-2.2" y="-2.2" width="4.4" height="4.4" fill="#d8e8f4"/><polygon points="-2.2,2.2 2.2,-2.2 2.2,2.2" fill="#2a80c0"/></g><g transform="translate(549,55)"><circle cx="0" cy="0" r="2.3" fill="#b8dcf2"/><rect x="-.4" y="-1.8" width="1.9" height="3.6" fill="#2a7ab8"/><rect x="-1.5" y="-.8" width="1.2" height="1.6" fill="#fff"/></g><g transform="translate(557,55)"><rect x="-2" y="-2.2" width="3.8" height="4.4" fill="#e6f2fa"/><rect x=".8" y="-1.8" width="1.2" height="2" fill="#3a9ad8"/><circle cx="-.5" cy=".5" r=".8" fill="#8cc8ec"/></g><g transform="translate(565,55)"><rect x="-1.5" y="-2.2" width="3" height="2.2" fill="#c8c8c8"/><ellipse cx=".3" cy="1.2" rx="2" ry="1.1" fill="#3a3a3a"/></g><g transform="translate(573,55)"><g fill="#b09050"><rect x="-2" y="-2.2" width="1.2" height="1.2"/><rect x=".6" y="-.5" width="1.4" height="1.4"/><rect x="-1.6" y="1" width="1.2" height="1.2"/><rect x=".8" y="1.5" width="1.2" height="1"/></g></g><g transform="translate(581,55)"><circle cx="-.6" cy="-1.1" r="1.1" fill="#f6eec0"/><rect x="-.2" y="-.2" width="1.6" height="1.6" fill="#777"/><rect x="-1.2" y="1.4" width="2.6" height=".9" fill="#555"/></g><g transform="translate(588.6,55)"><rect x="-2" y="-2" width="1.3" height="1.2" fill="#4aa050"/><rect x="-2" y="1" width="1.3" height="1.2" fill="#2a70c0"/><rect x="-.6" y="-1" width="1.2" height="2.5" fill="#b8c8d8"/><rect x="1" y="-.8" width="1.2" height="1.6" fill="#e06060"/></g></svg><div class="r" style="left:108.7px;top:384px;width:889.2px;height:8.4px;background:#fbfbfb;border-top:.5px solid #e4e4e4"></div><svg style="left:110px;top:387.3px" width="18" height="3" viewBox="0 0 18 3"><g fill="#555"><polygon points="0,1.5 1.6,.2 1.6,2.8"/><polygon points="1.6,1.5 3.2,.2 3.2,2.8"/><polygon points="6.5,1.5 8,.3 8,2.7"/><polygon points="11.5,.3 13,1.5 11.5,2.7"/><polygon points="14.8,.2 16.4,1.5 14.8,2.8"/><polygon points="16.4,.2 18,1.5 16.4,2.8"/></g></svg><div class="r" style="left:130.5px;top:385.5px;width:6px;height:6.2px;background:#efefef;border:.5px solid #d4d4d4"></div><div class="r" style="left:133.2px;top:388.2px;width:0.7px;height:0.9px;background:#777;"></div><div class="t" style="left:141px;top:386.88px;font-size:4.6px;color:#2a2a2a;font-weight:normal;">Default All</div><div class="r" style="left:167px;top:384.5px;width:0.5px;height:7.5px;background:#ddd;"></div><div class="r" style="left:0px;top:392.4px;width:999px;height:1.2px;background:#c9cbcd;"></div><div class="r" style="left:0px;top:393.6px;width:999px;height:12.4px;background:#eef0f2;"></div><svg style="left:2px;top:398.8px" width="6" height="6" viewBox="0 0 6 6"><rect x=".3" y=".3" width="3.2" height=".7" fill="#8a8a8a"/><rect x="1.4" y=".3" width=".9" height="5.3" fill="#8a8a8a"/><rect x="4" y="1" width=".5" height="4.6" fill="#b0b0b0"/><rect x="4.6" y="3" width=".9" height=".5" fill="#999"/></svg><svg style="left:10px;top:399.3px" width="5" height="5" viewBox="0 0 5 5"><path d="M.6,4.4 C1,2 2,1 4.5,.5 C4.2,2.5 3,4 .6,4.4 Z" fill="#3aa0e8"/><path d="M1.5,3.5 L3.8,1.2" stroke="#bfe4fa" stroke-width=".5"/></svg><svg style="left:20px;top:396.8px" width="2" height="2" viewBox="0 0 2 2"><circle cx="1" cy="1" r=".7" fill="#1f5f98"/></svg><svg style="left:20px;top:401.6px" width="2" height="2" viewBox="0 0 2 2"><circle cx="1" cy="1" r=".7" fill="#1f5f98"/></svg><div class="t" style="left:23.5px;top:396.22px;font-size:4.1px;color:#1a1a1a;font-weight:normal;transform:scaleX(.885);transform-origin:0 0;-webkit-text-stroke:.15px #1a1a1a">SINE_FRAME02_COMP regeneration completed successfully.</div><div class="t" style="left:23.5px;top:401.02px;font-size:4.1px;color:#1a1a1a;font-weight:normal;transform:scaleX(.878);transform-origin:0 0;-webkit-text-stroke:.15px #1a1a1a">Part "SINE_FRAME02_COMP" not changed since last regen.</div><div class="r" style="left:856px;top:394px;width:0.5px;height:11.5px;background:#dcdee0;"></div><svg style="left:868.5px;top:398.5px" width="8" height="4" viewBox="0 0 8 4"><circle cx="2" cy="2" r="1.8" fill="#2ed02e"/><rect x="4.5" y="1.6" width=".9" height=".9" fill="#c4c4c4"/><rect x="6" y="1.6" width=".9" height=".9" fill="#c4c4c4"/></svg><svg style="left:879.5px;top:398px" width="4" height="5.5" viewBox="0 0 4 5.5"><rect x=".3" y=".3" width=".5" height="5" fill="#b8b8b8"/><polygon points=".8,.5 3.5,1.3 .8,2.6" fill="#c8c8c8"/></svg><div class="r" style="left:890.8px;top:396.8px;width:11.5px;height:8px;background:#f4f5f6;border:.4px solid #e2e2e2"></div><svg style="left:893.8px;top:398.2px" width="6" height="5.5" viewBox="0 0 6 5.5"><path d="M.5,5 L1.2,.6 H2.4 L2.6,2.5 H3.4 L3.6,.6 H4.8 L5.5,5 H3.6 V3.3 H2.4 V5 Z" fill="#222"/></svg><div class="r" style="left:935.8px;top:397.7px;width:57.2px;height:6.3px;background:#fdfdfd;border:.5px solid #d4d4d4"></div><div class="t" style="left:938.5px;top:399.32px;font-size:4.1px;color:#444;font-weight:normal;-webkit-text-stroke:0">Smart</div><div class="r" style="left:988.8px;top:398.3px;width:0.4px;height:5.2px;background:#e0e0e0;"></div><div class="t" style="left:990px;top:399.95px;font-size:3px;color:#555;font-weight:normal;">▾</div><div class="r" style="left:0px;top:406.2px;width:999px;height:11.8px;background:#070707;"></div><div class="r" style="left:171px;top:406.3px;width:13.5px;height:11.7px;background:#373737;"></div><div class="r" style="left:44px;top:417.3px;width:11px;height:0.7px;background:#8a8a8a;"></div><div class="r" style="left:129px;top:417.3px;width:12px;height:0.7px;background:#8a8a8a;"></div><div class="r" style="left:143.5px;top:417.3px;width:12.0px;height:0.7px;background:#8a8a8a;"></div><div class="r" style="left:158px;top:417.3px;width:12px;height:0.7px;background:#8a8a8a;"></div><div class="r" style="left:171px;top:417.3px;width:13.5px;height:0.7px;background:#a8b4c0;"></div><svg style="left:4.5px;top:409.8px" width="5.2" height="5.2" viewBox="0 0 5.2 5.2"><g fill="#f2f2f2"><rect x="0" y=".3" width="2.4" height="2.1"/><rect x="2.7" y="0" width="2.5" height="2.4"/><rect x="0" y="2.7" width="2.4" height="2.1"/><rect x="2.7" y="2.7" width="2.5" height="2.4"/></g></svg><svg style="left:18px;top:409.3px" width="6.5" height="6.5" viewBox="0 0 6.5 6.5"><circle cx="4" cy="2.5" r="1.9" fill="none" stroke="#cfcfcf" stroke-width=".6"/><line x1="2.6" y1="3.9" x2=".5" y2="6" stroke="#cfcfcf" stroke-width=".7"/></svg><svg style="left:31.5px;top:409.8px" width="7" height="5" viewBox="0 0 7 5"><rect x=".4" y=".6" width="6.2" height="3.8" rx="1.6" fill="none" stroke="#d8d8d8" stroke-width=".7"/></svg><svg style="left:46px;top:409px" width="7.5" height="7" viewBox="0 0 7.5 7"><rect x="2.5" y="1" width="5" height="5" fill="#4ab0f0"/><rect x=".2" y=".5" width="4.3" height="6" fill="#1565c0"/><ellipse cx="2.35" cy="3.5" rx="1.1" ry="1.6" fill="none" stroke="#fff" stroke-width=".6"/><rect x="5" y="2.5" width="2" height="2" fill="#e8f4fc"/></svg><svg style="left:60px;top:408.8px" width="7.5" height="7.5" viewBox="0 0 7.5 7.5"><path d="M.5,2.5 C3,2 5,1.5 7,.5" stroke="#f0c020" stroke-width="1.2" fill="none"/><path d="M2,1 L6.5,7" stroke="#2a6ad0" stroke-width=".9"/><path d="M.5,2.5 L1.5,6" stroke="#f0c020" stroke-width=".9"/></svg><svg style="left:75px;top:409px" width="6.5" height="6.5" viewBox="0 0 6.5 6.5"><rect x=".2" y=".2" width="6" height="6" fill="#3a2a90"/><rect x="1" y="1.2" width="2" height="2" fill="#d04aa0"/><rect x="3.4" y="3.2" width="2" height="2" fill="#40a0e0"/><rect x="3.5" y="1" width="1.5" height="1.5" fill="#e0c040"/></svg><svg style="left:90px;top:408.8px" width="5" height="7.5" viewBox="0 0 5 7.5"><path d="M2.5,.3 V3.5 C.5,4 .5,7.2 2.5,7.2 C4.5,7.2 4.5,4 2.5,3.5" fill="#c07818" stroke="#e09a30" stroke-width=".5"/></svg><svg style="left:102px;top:409.5px" width="6.5" height="6" viewBox="0 0 6.5 6"><path d="M.3,1 H2.5 L3.2,1.8 H6.2 V5.7 H.3 Z" fill="#f0d070"/><rect x="2" y="3" width="2.4" height="2.7" fill="#3a90d8"/></svg><svg style="left:116.5px;top:409px" width="7.5" height="7" viewBox="0 0 7.5 7"><rect x=".3" y=".3" width="6.8" height="6.4" fill="#e8e8e8"/><rect x="3.2" y="1" width="3" height="3" fill="#2a8ad8"/><rect x="1" y="1" width="1.5" height="5" fill="#c8c8c8"/></svg><svg style="left:131px;top:409px" width="7.5" height="7" viewBox="0 0 7.5 7"><path d="M.3,4.5 L3,3 L4.5,.5 L7.2,6.5 L5,5.5 L3.5,4 Z" fill="#e06a20"/><path d="M.3,4.5 L3,3 L3.5,4 L2,5.5 Z" fill="#3a7ad0"/></svg><svg style="left:145.5px;top:409px" width="7" height="7" viewBox="0 0 7 7"><circle cx="3.5" cy="3.5" r="3.3" fill="#f07a1a"/><circle cx="3.7" cy="3.6" r="2" fill="#3a50b0"/><path d="M.4,3 C1,6.5 6,7 6.8,3.5 C6,5 3,5.5 2,3.5" fill="#e8401a"/></svg><svg style="left:160px;top:409px" width="7" height="7" viewBox="0 0 7 7"><circle cx="3.5" cy="3.5" r="3.3" fill="#3aa84a"/><path d="M3.5,.2 A3.3,3.3 0 0 1 6.4,2 L3.5,2 Z M.6,2 A3.3,3.3 0 0 1 3.5,.2 L3.5,2 Z" fill="#e44a3a"/><path d="M6.4,2 A3.3,3.3 0 0 1 4.5,6.6 L5,3.5 Z" fill="#f2c230"/><circle cx="3.5" cy="3.5" r="1.6" fill="#fff"/><circle cx="3.5" cy="3.5" r="1.1" fill="#3a7ae0"/></svg><svg style="left:173.5px;top:409px" width="7.5" height="7" viewBox="0 0 7.5 7"><rect x=".3" y=".3" width="6.8" height="6.4" fill="#e8e8e8"/><rect x="3.2" y="1" width="3" height="3" fill="#2a8ad8"/><rect x="1" y="1" width="1.5" height="5" fill="#c8c8c8"/></svg><svg style="left:188px;top:408.6px" width="7.5" height="7.5" viewBox="0 0 7.5 7.5"><ellipse cx="3.2" cy="4.5" rx="3" ry="2.5" fill="#8ab8e0"/><path d="M1,3.5 L6.5,.8" stroke="#f0c040" stroke-width=".9"/><circle cx="3" cy="4.8" r="1" fill="#e06040"/></svg><svg style="left:945.3px;top:411px" width="4.5" height="3" viewBox="0 0 4.5 3"><path d="M.4,2.6 L2.2,.7 L4,2.6" fill="none" stroke="#dcdcdc" stroke-width=".6"/></svg><svg style="left:952px;top:409.8px" width="5.5" height="5.5" viewBox="0 0 5.5 5.5"><rect x=".5" y=".5" width="4.2" height="3.2" fill="none" stroke="#dcdcdc" stroke-width=".6"/><rect x="2.2" y="3.8" width=".8" height="1.3" fill="#dcdcdc"/></svg><svg style="left:959.5px;top:410px" width="5" height="5" viewBox="0 0 5 5"><path d="M.4,1.8 H1.5 L2.8,.6 V4.4 L1.5,3.2 H.4 Z" fill="#dcdcdc"/><path d="M3.6,1.5 Q4.4,2.5 3.6,3.5" fill="none" stroke="#dcdcdc" stroke-width=".4"/></svg><div class="t" style="left:968.8px;top:408.36px;font-size:3.4px;color:#d4d4d4;font-weight:normal;-webkit-text-stroke:0">4:00 PM</div><div class="t" style="left:967.8px;top:413.16px;font-size:3.4px;color:#d4d4d4;font-weight:normal;-webkit-text-stroke:0">1/8/2019</div><svg style="left:987px;top:408.8px" width="8" height="7" viewBox="0 0 8 7"><rect x=".5" y=".5" width="5" height="3.8" fill="none" stroke="#e0e0e0" stroke-width=".7"/><circle cx="5.5" cy="4.8" r="1.8" fill="#e0e0e0"/><text x="5.5" y="5.9" font-size="2.6" text-anchor="middle" fill="#111" font-family="Liberation Sans">1</text></svg></div></body></html>
